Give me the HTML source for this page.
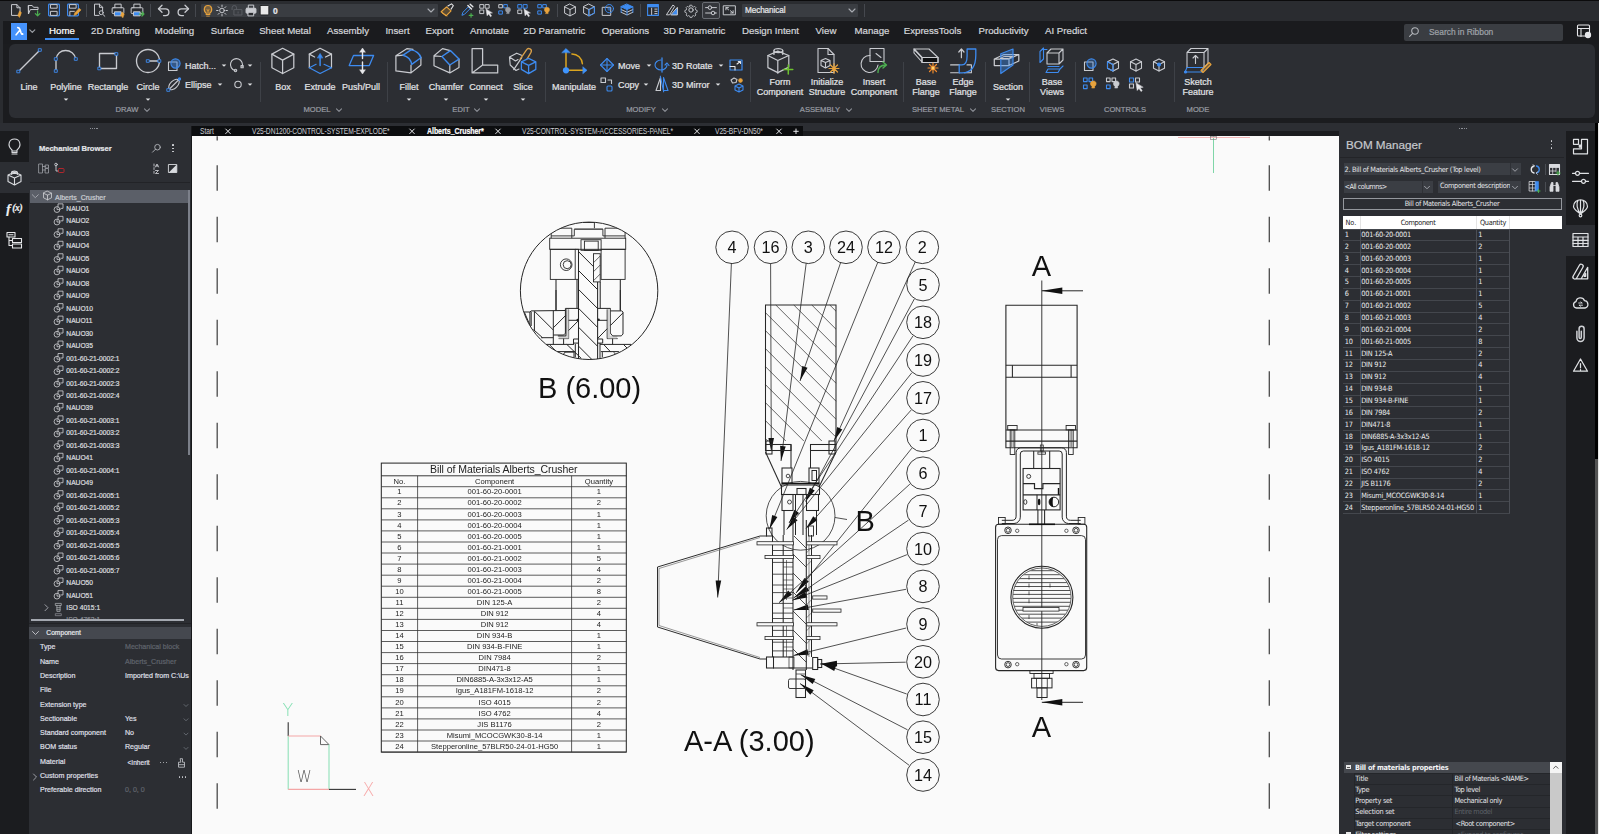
<!DOCTYPE html>
<html lang="en"><head><meta charset="utf-8"><title>Alberts_Crusher - Mechanical</title>
<style>
*{box-sizing:border-box;margin:0;padding:0}
html,body{width:1599px;height:834px;overflow:hidden;background:#1b1c1f}
body{position:relative;font-family:"Liberation Sans",sans-serif;color:#d6d8dc;-webkit-font-smoothing:antialiased}
div,span.t,svg.i{position:absolute}
span.t{white-space:nowrap;line-height:1;display:block;-webkit-text-stroke:.22px currentColor}
svg{display:block;overflow:visible}
svg.i{fill:none;stroke:#c9cbd0;stroke-width:1.1;stroke-linecap:round;stroke-linejoin:round}
.b{font-weight:bold}
</style></head><body>
<div style="left:0px;top:0px;width:1599px;height:20.5px;background:#2a2c30;border-top:1px solid #0b0b0c"></div>
<div style="left:201px;top:4px;width:237px;height:12.5px;background:#3a3d42;border-radius:1px"></div>
<span class="t b" style="top:10.5px;font-size:8.5px;color:#e6e7ea;left:273px;transform:translateY(-50%);">0</span>
<div style="left:742px;top:4px;width:116px;height:12.5px;background:#3a3d42;border-radius:1px"></div>
<span class="t" style="top:10.5px;font-size:8.2px;color:#e6e7ea;left:745px;transform:translateY(-50%);letter-spacing:-0.1px;">Mechanical</span>
<div style="left:702px;top:2px;width:18px;height:16.5px;border:1px solid #6a6d73;border-radius:2px;background:#34363b"></div>
<div style="left:86px;top:4px;width:1px;height:13px;background:#45484e"></div>
<div style="left:150px;top:4px;width:1px;height:13px;background:#45484e"></div>
<div style="left:195px;top:4px;width:1px;height:13px;background:#45484e"></div>
<div style="left:557px;top:4px;width:1px;height:13px;background:#45484e"></div>
<div style="left:640px;top:4px;width:1px;height:13px;background:#45484e"></div>
<div style="left:864px;top:4px;width:1px;height:13px;background:#45484e"></div>
<div style="left:0px;top:20.5px;width:1599px;height:23.5px;background:#1a1b1e"></div>
<div style="left:10.9px;top:23.2px;width:16.1px;height:16.8px;background:#4592fb"></div>
<span class="t" style="top:31.3px;font-size:9.7px;color:#ffffff;left:62.0px;transform:translate(-50%,-50%);">Home</span>
<span class="t" style="top:31.3px;font-size:9.7px;color:#d3d5d9;left:115.5px;transform:translate(-50%,-50%);">2D Drafting</span>
<span class="t" style="top:31.3px;font-size:9.7px;color:#d3d5d9;left:174.5px;transform:translate(-50%,-50%);">Modeling</span>
<span class="t" style="top:31.3px;font-size:9.7px;color:#d3d5d9;left:227.5px;transform:translate(-50%,-50%);">Surface</span>
<span class="t" style="top:31.3px;font-size:9.7px;color:#d3d5d9;left:285.0px;transform:translate(-50%,-50%);">Sheet Metal</span>
<span class="t" style="top:31.3px;font-size:9.7px;color:#d3d5d9;left:348.0px;transform:translate(-50%,-50%);">Assembly</span>
<span class="t" style="top:31.3px;font-size:9.7px;color:#d3d5d9;left:397.5px;transform:translate(-50%,-50%);">Insert</span>
<span class="t" style="top:31.3px;font-size:9.7px;color:#d3d5d9;left:439.5px;transform:translate(-50%,-50%);">Export</span>
<span class="t" style="top:31.3px;font-size:9.7px;color:#d3d5d9;left:489.5px;transform:translate(-50%,-50%);">Annotate</span>
<span class="t" style="top:31.3px;font-size:9.7px;color:#d3d5d9;left:554.5px;transform:translate(-50%,-50%);">2D Parametric</span>
<span class="t" style="top:31.3px;font-size:9.7px;color:#d3d5d9;left:625.5px;transform:translate(-50%,-50%);">Operations</span>
<span class="t" style="top:31.3px;font-size:9.7px;color:#d3d5d9;left:694.5px;transform:translate(-50%,-50%);">3D Parametric</span>
<span class="t" style="top:31.3px;font-size:9.7px;color:#d3d5d9;left:770.5px;transform:translate(-50%,-50%);">Design Intent</span>
<span class="t" style="top:31.3px;font-size:9.7px;color:#d3d5d9;left:826.0px;transform:translate(-50%,-50%);">View</span>
<span class="t" style="top:31.3px;font-size:9.7px;color:#d3d5d9;left:872.0px;transform:translate(-50%,-50%);">Manage</span>
<span class="t" style="top:31.3px;font-size:9.7px;color:#d3d5d9;left:932.5px;transform:translate(-50%,-50%);">ExpressTools</span>
<span class="t" style="top:31.3px;font-size:9.7px;color:#d3d5d9;left:1003.5px;transform:translate(-50%,-50%);">Productivity</span>
<span class="t" style="top:31.3px;font-size:9.7px;color:#d3d5d9;left:1066.0px;transform:translate(-50%,-50%);">AI Predict</span>
<div style="left:45px;top:38.3px;width:33.5px;height:2px;background:#3d8bf0"></div>
<div style="left:1403.5px;top:24px;width:159px;height:16.5px;background:#3a3d42;border-radius:2px"></div>
<span class="t" style="top:32.3px;font-size:8.4px;color:#9fa2a8;left:1429px;transform:translateY(-50%);">Search in Ribbon</span>
<div style="left:9px;top:44px;width:1585.5px;height:74.3px;background:#2c2e33;border-radius:6px"></div>
<div style="left:260px;top:61.5px;width:1px;height:40.5px;background:#3e4147"></div>
<div style="left:387px;top:61.5px;width:1px;height:40.5px;background:#3e4147"></div>
<div style="left:545.2px;top:61.5px;width:1px;height:40.5px;background:#3e4147"></div>
<div style="left:750px;top:61.5px;width:1px;height:40.5px;background:#3e4147"></div>
<div style="left:903.4px;top:61.5px;width:1px;height:40.5px;background:#3e4147"></div>
<div style="left:985.4px;top:61.5px;width:1px;height:40.5px;background:#3e4147"></div>
<div style="left:1029.2px;top:61.5px;width:1px;height:40.5px;background:#3e4147"></div>
<div style="left:1074.8px;top:61.5px;width:1px;height:40.5px;background:#3e4147"></div>
<div style="left:1174.4px;top:61.5px;width:1px;height:40.5px;background:#3e4147"></div>
<span class="t" style="top:87.3px;font-size:9px;color:#e1e3e6;left:29px;transform:translate(-50%,-50%);">Line</span>
<span class="t" style="top:87.3px;font-size:9px;color:#e1e3e6;left:66px;transform:translate(-50%,-50%);">Polyline</span>
<span class="t" style="top:87.3px;font-size:9px;color:#e1e3e6;left:108px;transform:translate(-50%,-50%);">Rectangle</span>
<span class="t" style="top:87.3px;font-size:9px;color:#e1e3e6;left:148px;transform:translate(-50%,-50%);">Circle</span>
<span class="t" style="top:87.3px;font-size:9px;color:#e1e3e6;left:283px;transform:translate(-50%,-50%);">Box</span>
<span class="t" style="top:87.3px;font-size:9px;color:#e1e3e6;left:320px;transform:translate(-50%,-50%);">Extrude</span>
<span class="t" style="top:87.3px;font-size:9px;color:#e1e3e6;left:361px;transform:translate(-50%,-50%);">Push/Pull</span>
<span class="t" style="top:87.3px;font-size:9px;color:#e1e3e6;left:409px;transform:translate(-50%,-50%);">Fillet</span>
<span class="t" style="top:87.3px;font-size:9px;color:#e1e3e6;left:446px;transform:translate(-50%,-50%);">Chamfer</span>
<span class="t" style="top:87.3px;font-size:9px;color:#e1e3e6;left:486px;transform:translate(-50%,-50%);">Connect</span>
<span class="t" style="top:87.3px;font-size:9px;color:#e1e3e6;left:523px;transform:translate(-50%,-50%);">Slice</span>
<span class="t" style="top:87.3px;font-size:9px;color:#e1e3e6;left:574px;transform:translate(-50%,-50%);">Manipulate</span>
<span class="t" style="top:87.3px;font-size:9px;color:#e1e3e6;left:1008px;transform:translate(-50%,-50%);">Section</span>
<span class="t" style="top:82.1px;font-size:9px;color:#e1e3e6;left:780px;transform:translate(-50%,-50%);">Form</span>
<span class="t" style="top:91.6px;font-size:9px;color:#e1e3e6;left:780px;transform:translate(-50%,-50%);">Component</span>
<span class="t" style="top:82.1px;font-size:9px;color:#e1e3e6;left:827px;transform:translate(-50%,-50%);">Initialize</span>
<span class="t" style="top:91.6px;font-size:9px;color:#e1e3e6;left:827px;transform:translate(-50%,-50%);">Structure</span>
<span class="t" style="top:82.1px;font-size:9px;color:#e1e3e6;left:874px;transform:translate(-50%,-50%);">Insert</span>
<span class="t" style="top:91.6px;font-size:9px;color:#e1e3e6;left:874px;transform:translate(-50%,-50%);">Component</span>
<span class="t" style="top:82.1px;font-size:9px;color:#e1e3e6;left:926px;transform:translate(-50%,-50%);">Base</span>
<span class="t" style="top:91.6px;font-size:9px;color:#e1e3e6;left:926px;transform:translate(-50%,-50%);">Flange</span>
<span class="t" style="top:82.1px;font-size:9px;color:#e1e3e6;left:963px;transform:translate(-50%,-50%);">Edge</span>
<span class="t" style="top:91.6px;font-size:9px;color:#e1e3e6;left:963px;transform:translate(-50%,-50%);">Flange</span>
<span class="t" style="top:82.1px;font-size:9px;color:#e1e3e6;left:1052px;transform:translate(-50%,-50%);">Base</span>
<span class="t" style="top:91.6px;font-size:9px;color:#e1e3e6;left:1052px;transform:translate(-50%,-50%);">Views</span>
<span class="t" style="top:82.1px;font-size:9px;color:#e1e3e6;left:1198px;transform:translate(-50%,-50%);">Sketch</span>
<span class="t" style="top:91.6px;font-size:9px;color:#e1e3e6;left:1198px;transform:translate(-50%,-50%);">Feature</span>
<span class="t" style="top:110.4px;font-size:7.6px;color:#989ba2;left:127px;transform:translate(-50%,-50%);letter-spacing:0px;">DRAW</span>
<span class="t" style="top:110.4px;font-size:7.6px;color:#989ba2;left:317px;transform:translate(-50%,-50%);letter-spacing:0px;">MODEL</span>
<span class="t" style="top:110.4px;font-size:7.6px;color:#989ba2;left:461px;transform:translate(-50%,-50%);letter-spacing:0px;">EDIT</span>
<span class="t" style="top:110.4px;font-size:7.6px;color:#989ba2;left:641px;transform:translate(-50%,-50%);letter-spacing:0px;">MODIFY</span>
<span class="t" style="top:110.4px;font-size:7.6px;color:#989ba2;left:820px;transform:translate(-50%,-50%);letter-spacing:0px;">ASSEMBLY</span>
<span class="t" style="top:110.4px;font-size:7.6px;color:#989ba2;left:938px;transform:translate(-50%,-50%);letter-spacing:0px;">SHEET METAL</span>
<span class="t" style="top:110.4px;font-size:7.6px;color:#989ba2;left:1008px;transform:translate(-50%,-50%);letter-spacing:0px;">SECTION</span>
<span class="t" style="top:110.4px;font-size:7.6px;color:#989ba2;left:1052px;transform:translate(-50%,-50%);letter-spacing:0px;">VIEWS</span>
<span class="t" style="top:110.4px;font-size:7.6px;color:#989ba2;left:1125px;transform:translate(-50%,-50%);letter-spacing:0px;">CONTROLS</span>
<span class="t" style="top:110.4px;font-size:7.6px;color:#989ba2;left:1198px;transform:translate(-50%,-50%);letter-spacing:0px;">MODE</span>
<span class="t" style="top:65.5px;font-size:9px;color:#e1e3e6;left:185px;transform:translateY(-50%);">Hatch...</span>
<span class="t" style="top:84.5px;font-size:9px;color:#e1e3e6;left:185px;transform:translateY(-50%);">Ellipse</span>
<span class="t" style="top:65.5px;font-size:9px;color:#e1e3e6;left:618px;transform:translateY(-50%);">Move</span>
<span class="t" style="top:84.5px;font-size:9px;color:#e1e3e6;left:618px;transform:translateY(-50%);">Copy</span>
<span class="t" style="top:65.5px;font-size:9px;color:#e1e3e6;left:672px;transform:translateY(-50%);">3D Rotate</span>
<span class="t" style="top:84.5px;font-size:9px;color:#e1e3e6;left:672px;transform:translateY(-50%);">3D Mirror</span>
<div style="left:0px;top:123.3px;width:1599px;height:8px;background:#2c2e33"></div>
<div style="left:0px;top:20px;width:3.4px;height:103.3px;background:#2a2c30"></div>
<div style="left:0px;top:131px;width:29px;height:703px;background:#1b1c1f"></div>
<div style="left:0px;top:162px;width:29px;height:30.5px;background:#2c2e33"></div>
<div style="left:29px;top:131px;width:162.5px;height:703px;background:#2c2e33"></div>
<div style="left:190.5px;top:126px;width:1.5px;height:708px;background:#17181a"></div>
<div style="left:89.5px;top:128px;width:1.3px;height:1.3px;background:#8d9097"></div>
<div style="left:91.8px;top:128px;width:1.3px;height:1.3px;background:#8d9097"></div>
<div style="left:94.1px;top:128px;width:1.3px;height:1.3px;background:#8d9097"></div>
<div style="left:96.4px;top:128px;width:1.3px;height:1.3px;background:#8d9097"></div>
<span class="t b" style="top:148.5px;font-size:7.6px;color:#e3e5e8;left:39px;transform:translateY(-50%);letter-spacing:-0.05px;">Mechanical Browser</span>
<div style="left:30px;top:181.5px;width:160px;height:1.2px;background:#222327"></div>
<div style="left:30px;top:190px;width:157.5px;height:12.8px;background:#5b5f68"></div>
<div style="left:187.5px;top:190px;width:2.6px;height:265px;background:#7c808a"></div>
<span class="t" style="top:196.5px;font-size:7px;color:#c9ccd1;left:55px;transform:translateY(-50%);">Alberts_Crusher</span>
<span class="t" style="top:208.97px;font-size:6.7px;color:#d9dbdf;left:66.3px;transform:translateY(-50%);">NAUO1</span>
<span class="t" style="top:221.44px;font-size:6.7px;color:#d9dbdf;left:66.3px;transform:translateY(-50%);">NAUO2</span>
<span class="t" style="top:233.91px;font-size:6.7px;color:#d9dbdf;left:66.3px;transform:translateY(-50%);">NAUO3</span>
<span class="t" style="top:246.38px;font-size:6.7px;color:#d9dbdf;left:66.3px;transform:translateY(-50%);">NAUO4</span>
<span class="t" style="top:258.85px;font-size:6.7px;color:#d9dbdf;left:66.3px;transform:translateY(-50%);">NAUO5</span>
<span class="t" style="top:271.32px;font-size:6.7px;color:#d9dbdf;left:66.3px;transform:translateY(-50%);">NAUO6</span>
<span class="t" style="top:283.79px;font-size:6.7px;color:#d9dbdf;left:66.3px;transform:translateY(-50%);">NAUO8</span>
<span class="t" style="top:296.26px;font-size:6.7px;color:#d9dbdf;left:66.3px;transform:translateY(-50%);">NAUO9</span>
<span class="t" style="top:308.73px;font-size:6.7px;color:#d9dbdf;left:66.3px;transform:translateY(-50%);">NAUO10</span>
<span class="t" style="top:321.2px;font-size:6.7px;color:#d9dbdf;left:66.3px;transform:translateY(-50%);">NAUO11</span>
<span class="t" style="top:333.67px;font-size:6.7px;color:#d9dbdf;left:66.3px;transform:translateY(-50%);">NAUO30</span>
<span class="t" style="top:346.14000000000004px;font-size:6.7px;color:#d9dbdf;left:66.3px;transform:translateY(-50%);">NAUO35</span>
<span class="t" style="top:358.61px;font-size:6.7px;color:#d9dbdf;left:66.3px;transform:translateY(-50%);">001-60-21-0002:1</span>
<span class="t" style="top:371.08px;font-size:6.7px;color:#d9dbdf;left:66.3px;transform:translateY(-50%);">001-60-21-0002:2</span>
<span class="t" style="top:383.55px;font-size:6.7px;color:#d9dbdf;left:66.3px;transform:translateY(-50%);">001-60-21-0002:3</span>
<span class="t" style="top:396.02000000000004px;font-size:6.7px;color:#d9dbdf;left:66.3px;transform:translateY(-50%);">001-60-21-0002:4</span>
<span class="t" style="top:408.49px;font-size:6.7px;color:#d9dbdf;left:66.3px;transform:translateY(-50%);">NAUO39</span>
<span class="t" style="top:420.96px;font-size:6.7px;color:#d9dbdf;left:66.3px;transform:translateY(-50%);">001-60-21-0003:1</span>
<span class="t" style="top:433.43px;font-size:6.7px;color:#d9dbdf;left:66.3px;transform:translateY(-50%);">001-60-21-0003:2</span>
<span class="t" style="top:445.90000000000003px;font-size:6.7px;color:#d9dbdf;left:66.3px;transform:translateY(-50%);">001-60-21-0003:3</span>
<span class="t" style="top:458.37px;font-size:6.7px;color:#d9dbdf;left:66.3px;transform:translateY(-50%);">NAUO41</span>
<span class="t" style="top:470.84000000000003px;font-size:6.7px;color:#d9dbdf;left:66.3px;transform:translateY(-50%);">001-60-21-0004:1</span>
<span class="t" style="top:483.31px;font-size:6.7px;color:#d9dbdf;left:66.3px;transform:translateY(-50%);">NAUO49</span>
<span class="t" style="top:495.78000000000003px;font-size:6.7px;color:#d9dbdf;left:66.3px;transform:translateY(-50%);">001-60-21-0005:1</span>
<span class="t" style="top:508.25px;font-size:6.7px;color:#d9dbdf;left:66.3px;transform:translateY(-50%);">001-60-21-0005:2</span>
<span class="t" style="top:520.72px;font-size:6.7px;color:#d9dbdf;left:66.3px;transform:translateY(-50%);">001-60-21-0005:3</span>
<span class="t" style="top:533.1899999999999px;font-size:6.7px;color:#d9dbdf;left:66.3px;transform:translateY(-50%);">001-60-21-0005:4</span>
<span class="t" style="top:545.66px;font-size:6.7px;color:#d9dbdf;left:66.3px;transform:translateY(-50%);">001-60-21-0005:5</span>
<span class="t" style="top:558.1299999999999px;font-size:6.7px;color:#d9dbdf;left:66.3px;transform:translateY(-50%);">001-60-21-0005:6</span>
<span class="t" style="top:570.5999999999999px;font-size:6.7px;color:#d9dbdf;left:66.3px;transform:translateY(-50%);">001-60-21-0005:7</span>
<span class="t" style="top:583.0699999999999px;font-size:6.7px;color:#d9dbdf;left:66.3px;transform:translateY(-50%);">NAUO50</span>
<span class="t" style="top:595.54px;font-size:6.7px;color:#d9dbdf;left:66.3px;transform:translateY(-50%);">NAUO51</span>
<span class="t" style="top:608.01px;font-size:6.7px;color:#d9dbdf;left:66.3px;transform:translateY(-50%);">ISO 4015:1</span>
<div style="left:30px;top:613px;width:157px;height:6.5px;overflow:hidden"><span class="t" style="top:6.8px;font-size:6.7px;color:#8f9299;left:36.3px;transform:translateY(-50%);">ISO 4762:1</span></div>
<div style="left:30.5px;top:619.3px;width:153.5px;height:2px;background:#a4a8b0"></div>
<div style="left:29px;top:622.5px;width:161.5px;height:1.3px;background:#222327"></div>
<div style="left:29px;top:626.5px;width:161.5px;height:12.8px;background:#45484f"></div>
<span class="t" style="top:633px;font-size:6.7px;color:#e3e5e8;left:46.3px;transform:translateY(-50%);">Component</span>
<span class="t" style="top:648.3px;font-size:7.1px;color:#dcdee2;left:40px;transform:translateY(-50%);">Type</span>
<span class="t" style="top:648.3px;font-size:7.1px;color:#5f636b;left:125px;transform:translateY(-50%);">Mechanical block</span>
<span class="t" style="top:662.5999999999999px;font-size:7.1px;color:#dcdee2;left:40px;transform:translateY(-50%);">Name</span>
<span class="t" style="top:662.5999999999999px;font-size:7.1px;color:#5f636b;left:125px;transform:translateY(-50%);">Alberts_Crusher</span>
<span class="t" style="top:676.9px;font-size:7.1px;color:#dcdee2;left:40px;transform:translateY(-50%);">Description</span>
<span class="t" style="top:676.9px;font-size:7.1px;color:#dcdee2;left:125px;transform:translateY(-50%);">Imported from C:\Us</span>
<span class="t" style="top:691.1999999999999px;font-size:7.1px;color:#dcdee2;left:40px;transform:translateY(-50%);">File</span>
<span class="t" style="top:705.5px;font-size:7.1px;color:#dcdee2;left:40px;transform:translateY(-50%);">Extension type</span>
<span class="t" style="top:719.8px;font-size:7.1px;color:#dcdee2;left:40px;transform:translateY(-50%);">Sectionable</span>
<span class="t" style="top:719.8px;font-size:7.1px;color:#dcdee2;left:125px;transform:translateY(-50%);">Yes</span>
<span class="t" style="top:734.0999999999999px;font-size:7.1px;color:#dcdee2;left:40px;transform:translateY(-50%);">Standard component</span>
<span class="t" style="top:734.0999999999999px;font-size:7.1px;color:#dcdee2;left:125px;transform:translateY(-50%);">No</span>
<span class="t" style="top:748.4px;font-size:7.1px;color:#dcdee2;left:40px;transform:translateY(-50%);">BOM status</span>
<span class="t" style="top:748.4px;font-size:7.1px;color:#dcdee2;left:125px;transform:translateY(-50%);">Regular</span>
<span class="t" style="top:762.6999999999999px;font-size:7.1px;color:#dcdee2;left:40px;transform:translateY(-50%);">Material</span>
<span class="t" style="top:777.0px;font-size:7.1px;color:#dcdee2;left:40px;transform:translateY(-50%);">Custom properties</span>
<span class="t" style="top:791.3px;font-size:7.1px;color:#dcdee2;left:40px;transform:translateY(-50%);">Preferable direction</span>
<span class="t" style="top:791.3px;font-size:7.1px;color:#5f636b;left:125px;transform:translateY(-50%);">0, 0, 0</span>
<span class="t" style="top:762.6999999999999px;font-size:6.6px;color:#dcdee2;left:127.5px;transform:translateY(-50%);">&lt;Inherit</span>
<div style="left:160px;top:762.0999999999999px;width:1.4px;height:1.4px;background:#c9cbd0;border-radius:50%"></div>
<div style="left:163px;top:762.0999999999999px;width:1.4px;height:1.4px;background:#c9cbd0;border-radius:50%"></div>
<div style="left:166px;top:762.0999999999999px;width:1.4px;height:1.4px;background:#c9cbd0;border-radius:50%"></div>
<div style="left:178.5px;top:776.4px;width:1.4px;height:1.4px;background:#c9cbd0;border-radius:50%"></div>
<div style="left:181.5px;top:776.4px;width:1.4px;height:1.4px;background:#c9cbd0;border-radius:50%"></div>
<div style="left:184.5px;top:776.4px;width:1.4px;height:1.4px;background:#c9cbd0;border-radius:50%"></div>
<div style="left:172.3px;top:144.39px;width:1.7px;height:1.7px;background:#d9dbdf;border-radius:50%"></div>
<div style="left:172.3px;top:147.6px;width:1.7px;height:1.7px;background:#d9dbdf;border-radius:50%"></div>
<div style="left:172.3px;top:150.81px;width:1.7px;height:1.7px;background:#d9dbdf;border-radius:50%"></div>
<span class="t b" style="top:208px;font-size:13px;color:#f2f3f5;left:6.3px;transform:translateY(-50%);font-family:'Liberation Serif',serif;font-style:italic;">f</span>
<span class="t b" style="top:208.8px;font-size:9.5px;color:#f2f3f5;left:12.3px;transform:translateY(-50%);letter-spacing:-0.4px;font-family:'Liberation Serif',serif;font-style:italic;">(x)</span>
<div style="left:192.3px;top:126.2px;width:611px;height:10.1px;background:#0c0d0f"></div>
<span class="t" style="left:200px;top:131px;font-size:9.4px;color:#c9cbd0;-webkit-text-stroke:0;transform:translateY(-50%) scaleX(0.715);transform-origin:0 50%;letter-spacing:-.1px">Start</span>
<span class="t" style="left:252px;top:131px;font-size:9.4px;color:#c9cbd0;-webkit-text-stroke:0;transform:translateY(-50%) scaleX(0.715);transform-origin:0 50%;letter-spacing:-.1px">V25-DN1200-CONTROL-SYSTEM-EXPLODE*</span>
<span class="t b" style="left:427px;top:131px;font-size:9.4px;color:#ffffff;transform:translateY(-50%) scaleX(0.75);transform-origin:0 50%;letter-spacing:-.1px">Alberts_Crusher*</span>
<span class="t" style="left:522px;top:131px;font-size:9.4px;color:#c9cbd0;-webkit-text-stroke:0;transform:translateY(-50%) scaleX(0.715);transform-origin:0 50%;letter-spacing:-.1px">V25-CONTROL-SYSTEM-ACCESSORIES-PANEL*</span>
<span class="t" style="left:715px;top:131px;font-size:9.4px;color:#c9cbd0;-webkit-text-stroke:0;transform:translateY(-50%) scaleX(0.715);transform-origin:0 50%;letter-spacing:-.1px">V25-BFV-DN50*</span>
<div style="left:1338.5px;top:131px;width:227px;height:703px;background:#2c2e33"></div>
<div style="left:1565.5px;top:131px;width:29.5px;height:703px;background:#1b1c1f"></div>
<div style="left:1565.5px;top:225px;width:29.5px;height:31px;background:#2c2e33"></div>
<div style="left:1595px;top:123.3px;width:2.7px;height:335.4px;background:#010101"></div>
<div style="left:1595px;top:458.7px;width:2.7px;height:376px;background:#545454"></div>
<div style="left:1597.7px;top:122.8px;width:1.3px;height:712px;background:#e9e9e9"></div>
<div style="left:1459.0px;top:128px;width:1.3px;height:1.3px;background:#8d9097"></div>
<div style="left:1461.3px;top:128px;width:1.3px;height:1.3px;background:#8d9097"></div>
<div style="left:1463.6px;top:128px;width:1.3px;height:1.3px;background:#8d9097"></div>
<div style="left:1465.9px;top:128px;width:1.3px;height:1.3px;background:#8d9097"></div>
<span class="t" style="top:144.5px;font-size:11.7px;color:#c6c8cc;left:1346px;transform:translateY(-50%);">BOM Manager</span>
<div style="left:1550.8px;top:140.29999999999998px;width:1.7px;height:1.7px;background:#d9dbdf;border-radius:50%"></div>
<div style="left:1550.8px;top:143.6px;width:1.7px;height:1.7px;background:#d9dbdf;border-radius:50%"></div>
<div style="left:1550.8px;top:146.9px;width:1.7px;height:1.7px;background:#d9dbdf;border-radius:50%"></div>
<div style="left:1340px;top:156.8px;width:224px;height:1.2px;background:#232428"></div>
<div style="left:1343.6px;top:163px;width:177.5px;height:12.3px;background:#3b3e44"></div>
<div style="left:1343.6px;top:180.5px;width:89.5px;height:12.3px;background:#3b3e44"></div>
<div style="left:1438px;top:180.5px;width:83px;height:12.3px;background:#3b3e44"></div>
<div style="left:1509.5px;top:163px;width:1px;height:12.3px;background:#2f3136"></div>
<div style="left:1421.5px;top:180.5px;width:1px;height:12.3px;background:#2f3136"></div>
<span class="t" style="top:169.5px;font-size:7.3px;color:#e6e7ea;left:1344.5px;transform:translateY(-50%);letter-spacing:-0.27px;font-family:'DejaVu Sans Condensed','DejaVu Sans','Liberation Sans',sans-serif;-webkit-text-stroke:0;">2. Bill of Materials Alberts_Crusher (Top level)</span>
<span class="t" style="top:187px;font-size:7.3px;color:#e6e7ea;left:1344.5px;transform:translateY(-50%);letter-spacing:-0.5px;font-family:'DejaVu Sans Condensed','DejaVu Sans','Liberation Sans',sans-serif;-webkit-text-stroke:0;">&lt;All columns&gt;</span>
<div style="left:1438.5px;top:181px;width:71px;height:11.3px;overflow:hidden"><span class="t" style="top:5.2px;font-size:7.3px;color:#e6e7ea;left:1.5px;transform:translateY(-50%);letter-spacing:-0.3px;font-family:'DejaVu Sans Condensed','DejaVu Sans','Liberation Sans',sans-serif;-webkit-text-stroke:0;">Component description</span></div>
<div style="left:1544.5px;top:164px;width:1px;height:10.5px;background:#4a4d53"></div>
<div style="left:1544.5px;top:181.5px;width:1px;height:10.5px;background:#4a4d53"></div>
<div style="left:1343.3px;top:197.5px;width:219px;height:12.6px;border:1.5px solid #94979d;background:#2c2e33"></div>
<span class="t" style="top:204px;font-size:7.3px;color:#e6e7ea;left:1452px;transform:translate(-50%,-50%);letter-spacing:-0.31px;font-family:'DejaVu Sans Condensed','DejaVu Sans','Liberation Sans',sans-serif;-webkit-text-stroke:0;">Bill of Materials Alberts_Crusher</span>
<div style="left:1343.3px;top:216px;width:219px;height:12.8px;background:#ffffff"></div>
<div style="left:1359.8px;top:216px;width:1px;height:12.8px;background:#e4e4e4"></div>
<div style="left:1476px;top:216px;width:1px;height:12.8px;background:#e4e4e4"></div>
<div style="left:1509.3px;top:216px;width:1px;height:12.8px;background:#e4e4e4"></div>
<span class="t" style="top:222.5px;font-size:7.3px;color:#222;left:1345.5px;transform:translateY(-50%);letter-spacing:-0.05px;font-family:'DejaVu Sans Condensed','DejaVu Sans','Liberation Sans',sans-serif;-webkit-text-stroke:0;">No.</span>
<span class="t" style="top:222.5px;font-size:7.3px;color:#222;left:1418px;transform:translate(-50%,-50%);letter-spacing:-0.38px;font-family:'DejaVu Sans Condensed','DejaVu Sans','Liberation Sans',sans-serif;-webkit-text-stroke:0;">Component</span>
<span class="t" style="top:222.5px;font-size:7.3px;color:#222;left:1493px;transform:translate(-50%,-50%);letter-spacing:-0.27px;font-family:'DejaVu Sans Condensed','DejaVu Sans','Liberation Sans',sans-serif;-webkit-text-stroke:0;">Quantity</span>
<div style="left:1343.3px;top:228.5px;width:166.5px;height:0.9px;background:#44474d"></div>
<div style="left:1343.3px;top:240.36px;width:166.5px;height:0.9px;background:#44474d"></div>
<div style="left:1343.3px;top:252.22px;width:166.5px;height:0.9px;background:#44474d"></div>
<div style="left:1343.3px;top:264.08px;width:166.5px;height:0.9px;background:#44474d"></div>
<div style="left:1343.3px;top:275.94px;width:166.5px;height:0.9px;background:#44474d"></div>
<div style="left:1343.3px;top:287.8px;width:166.5px;height:0.9px;background:#44474d"></div>
<div style="left:1343.3px;top:299.66px;width:166.5px;height:0.9px;background:#44474d"></div>
<div style="left:1343.3px;top:311.52px;width:166.5px;height:0.9px;background:#44474d"></div>
<div style="left:1343.3px;top:323.38px;width:166.5px;height:0.9px;background:#44474d"></div>
<div style="left:1343.3px;top:335.24px;width:166.5px;height:0.9px;background:#44474d"></div>
<div style="left:1343.3px;top:347.09999999999997px;width:166.5px;height:0.9px;background:#44474d"></div>
<div style="left:1343.3px;top:358.96px;width:166.5px;height:0.9px;background:#44474d"></div>
<div style="left:1343.3px;top:370.82px;width:166.5px;height:0.9px;background:#44474d"></div>
<div style="left:1343.3px;top:382.68px;width:166.5px;height:0.9px;background:#44474d"></div>
<div style="left:1343.3px;top:394.54px;width:166.5px;height:0.9px;background:#44474d"></div>
<div style="left:1343.3px;top:406.4px;width:166.5px;height:0.9px;background:#44474d"></div>
<div style="left:1343.3px;top:418.26px;width:166.5px;height:0.9px;background:#44474d"></div>
<div style="left:1343.3px;top:430.12px;width:166.5px;height:0.9px;background:#44474d"></div>
<div style="left:1343.3px;top:441.97999999999996px;width:166.5px;height:0.9px;background:#44474d"></div>
<div style="left:1343.3px;top:453.84px;width:166.5px;height:0.9px;background:#44474d"></div>
<div style="left:1343.3px;top:465.7px;width:166.5px;height:0.9px;background:#44474d"></div>
<div style="left:1343.3px;top:477.56px;width:166.5px;height:0.9px;background:#44474d"></div>
<div style="left:1343.3px;top:489.41999999999996px;width:166.5px;height:0.9px;background:#44474d"></div>
<div style="left:1343.3px;top:501.28px;width:166.5px;height:0.9px;background:#44474d"></div>
<div style="left:1343.3px;top:513.1400000000001px;width:166.5px;height:0.9px;background:#44474d"></div>
<div style="left:1359.8px;top:228.8px;width:0.9px;height:284.64px;background:#4b4e55"></div>
<div style="left:1476px;top:228.8px;width:0.9px;height:284.64px;background:#4b4e55"></div>
<div style="left:1509.3px;top:228.8px;width:0.9px;height:284.64px;background:#4b4e55"></div>
<span class="t" style="top:234.93px;font-size:7.3px;color:#eceef0;left:1344.8px;transform:translateY(-50%);letter-spacing:-0.25px;font-family:'DejaVu Sans Condensed','DejaVu Sans','Liberation Sans',sans-serif;-webkit-text-stroke:0;">1</span>
<span class="t" style="top:234.93px;font-size:7.3px;color:#eceef0;left:1361.3px;transform:translateY(-50%);letter-spacing:-0.25px;font-family:'DejaVu Sans Condensed','DejaVu Sans','Liberation Sans',sans-serif;-webkit-text-stroke:0;">001-60-20-0001</span>
<span class="t" style="top:234.93px;font-size:7.3px;color:#eceef0;left:1478.2px;transform:translateY(-50%);font-family:'DejaVu Sans Condensed','DejaVu Sans','Liberation Sans',sans-serif;-webkit-text-stroke:0;">1</span>
<span class="t" style="top:246.79000000000002px;font-size:7.3px;color:#eceef0;left:1344.8px;transform:translateY(-50%);letter-spacing:-0.25px;font-family:'DejaVu Sans Condensed','DejaVu Sans','Liberation Sans',sans-serif;-webkit-text-stroke:0;">2</span>
<span class="t" style="top:246.79000000000002px;font-size:7.3px;color:#eceef0;left:1361.3px;transform:translateY(-50%);letter-spacing:-0.25px;font-family:'DejaVu Sans Condensed','DejaVu Sans','Liberation Sans',sans-serif;-webkit-text-stroke:0;">001-60-20-0002</span>
<span class="t" style="top:246.79000000000002px;font-size:7.3px;color:#eceef0;left:1478.2px;transform:translateY(-50%);font-family:'DejaVu Sans Condensed','DejaVu Sans','Liberation Sans',sans-serif;-webkit-text-stroke:0;">2</span>
<span class="t" style="top:258.65px;font-size:7.3px;color:#eceef0;left:1344.8px;transform:translateY(-50%);letter-spacing:-0.25px;font-family:'DejaVu Sans Condensed','DejaVu Sans','Liberation Sans',sans-serif;-webkit-text-stroke:0;">3</span>
<span class="t" style="top:258.65px;font-size:7.3px;color:#eceef0;left:1361.3px;transform:translateY(-50%);letter-spacing:-0.25px;font-family:'DejaVu Sans Condensed','DejaVu Sans','Liberation Sans',sans-serif;-webkit-text-stroke:0;">001-60-20-0003</span>
<span class="t" style="top:258.65px;font-size:7.3px;color:#eceef0;left:1478.2px;transform:translateY(-50%);font-family:'DejaVu Sans Condensed','DejaVu Sans','Liberation Sans',sans-serif;-webkit-text-stroke:0;">1</span>
<span class="t" style="top:270.51px;font-size:7.3px;color:#eceef0;left:1344.8px;transform:translateY(-50%);letter-spacing:-0.25px;font-family:'DejaVu Sans Condensed','DejaVu Sans','Liberation Sans',sans-serif;-webkit-text-stroke:0;">4</span>
<span class="t" style="top:270.51px;font-size:7.3px;color:#eceef0;left:1361.3px;transform:translateY(-50%);letter-spacing:-0.25px;font-family:'DejaVu Sans Condensed','DejaVu Sans','Liberation Sans',sans-serif;-webkit-text-stroke:0;">001-60-20-0004</span>
<span class="t" style="top:270.51px;font-size:7.3px;color:#eceef0;left:1478.2px;transform:translateY(-50%);font-family:'DejaVu Sans Condensed','DejaVu Sans','Liberation Sans',sans-serif;-webkit-text-stroke:0;">1</span>
<span class="t" style="top:282.37px;font-size:7.3px;color:#eceef0;left:1344.8px;transform:translateY(-50%);letter-spacing:-0.25px;font-family:'DejaVu Sans Condensed','DejaVu Sans','Liberation Sans',sans-serif;-webkit-text-stroke:0;">5</span>
<span class="t" style="top:282.37px;font-size:7.3px;color:#eceef0;left:1361.3px;transform:translateY(-50%);letter-spacing:-0.25px;font-family:'DejaVu Sans Condensed','DejaVu Sans','Liberation Sans',sans-serif;-webkit-text-stroke:0;">001-60-20-0005</span>
<span class="t" style="top:282.37px;font-size:7.3px;color:#eceef0;left:1478.2px;transform:translateY(-50%);font-family:'DejaVu Sans Condensed','DejaVu Sans','Liberation Sans',sans-serif;-webkit-text-stroke:0;">1</span>
<span class="t" style="top:294.23px;font-size:7.3px;color:#eceef0;left:1344.8px;transform:translateY(-50%);letter-spacing:-0.25px;font-family:'DejaVu Sans Condensed','DejaVu Sans','Liberation Sans',sans-serif;-webkit-text-stroke:0;">6</span>
<span class="t" style="top:294.23px;font-size:7.3px;color:#eceef0;left:1361.3px;transform:translateY(-50%);letter-spacing:-0.25px;font-family:'DejaVu Sans Condensed','DejaVu Sans','Liberation Sans',sans-serif;-webkit-text-stroke:0;">001-60-21-0001</span>
<span class="t" style="top:294.23px;font-size:7.3px;color:#eceef0;left:1478.2px;transform:translateY(-50%);font-family:'DejaVu Sans Condensed','DejaVu Sans','Liberation Sans',sans-serif;-webkit-text-stroke:0;">1</span>
<span class="t" style="top:306.09000000000003px;font-size:7.3px;color:#eceef0;left:1344.8px;transform:translateY(-50%);letter-spacing:-0.25px;font-family:'DejaVu Sans Condensed','DejaVu Sans','Liberation Sans',sans-serif;-webkit-text-stroke:0;">7</span>
<span class="t" style="top:306.09000000000003px;font-size:7.3px;color:#eceef0;left:1361.3px;transform:translateY(-50%);letter-spacing:-0.25px;font-family:'DejaVu Sans Condensed','DejaVu Sans','Liberation Sans',sans-serif;-webkit-text-stroke:0;">001-60-21-0002</span>
<span class="t" style="top:306.09000000000003px;font-size:7.3px;color:#eceef0;left:1478.2px;transform:translateY(-50%);font-family:'DejaVu Sans Condensed','DejaVu Sans','Liberation Sans',sans-serif;-webkit-text-stroke:0;">5</span>
<span class="t" style="top:317.95px;font-size:7.3px;color:#eceef0;left:1344.8px;transform:translateY(-50%);letter-spacing:-0.25px;font-family:'DejaVu Sans Condensed','DejaVu Sans','Liberation Sans',sans-serif;-webkit-text-stroke:0;">8</span>
<span class="t" style="top:317.95px;font-size:7.3px;color:#eceef0;left:1361.3px;transform:translateY(-50%);letter-spacing:-0.25px;font-family:'DejaVu Sans Condensed','DejaVu Sans','Liberation Sans',sans-serif;-webkit-text-stroke:0;">001-60-21-0003</span>
<span class="t" style="top:317.95px;font-size:7.3px;color:#eceef0;left:1478.2px;transform:translateY(-50%);font-family:'DejaVu Sans Condensed','DejaVu Sans','Liberation Sans',sans-serif;-webkit-text-stroke:0;">4</span>
<span class="t" style="top:329.81px;font-size:7.3px;color:#eceef0;left:1344.8px;transform:translateY(-50%);letter-spacing:-0.25px;font-family:'DejaVu Sans Condensed','DejaVu Sans','Liberation Sans',sans-serif;-webkit-text-stroke:0;">9</span>
<span class="t" style="top:329.81px;font-size:7.3px;color:#eceef0;left:1361.3px;transform:translateY(-50%);letter-spacing:-0.25px;font-family:'DejaVu Sans Condensed','DejaVu Sans','Liberation Sans',sans-serif;-webkit-text-stroke:0;">001-60-21-0004</span>
<span class="t" style="top:329.81px;font-size:7.3px;color:#eceef0;left:1478.2px;transform:translateY(-50%);font-family:'DejaVu Sans Condensed','DejaVu Sans','Liberation Sans',sans-serif;-webkit-text-stroke:0;">2</span>
<span class="t" style="top:341.67px;font-size:7.3px;color:#eceef0;left:1344.8px;transform:translateY(-50%);letter-spacing:-0.25px;font-family:'DejaVu Sans Condensed','DejaVu Sans','Liberation Sans',sans-serif;-webkit-text-stroke:0;">10</span>
<span class="t" style="top:341.67px;font-size:7.3px;color:#eceef0;left:1361.3px;transform:translateY(-50%);letter-spacing:-0.25px;font-family:'DejaVu Sans Condensed','DejaVu Sans','Liberation Sans',sans-serif;-webkit-text-stroke:0;">001-60-21-0005</span>
<span class="t" style="top:341.67px;font-size:7.3px;color:#eceef0;left:1478.2px;transform:translateY(-50%);font-family:'DejaVu Sans Condensed','DejaVu Sans','Liberation Sans',sans-serif;-webkit-text-stroke:0;">8</span>
<span class="t" style="top:353.53px;font-size:7.3px;color:#eceef0;left:1344.8px;transform:translateY(-50%);letter-spacing:-0.25px;font-family:'DejaVu Sans Condensed','DejaVu Sans','Liberation Sans',sans-serif;-webkit-text-stroke:0;">11</span>
<span class="t" style="top:353.53px;font-size:7.3px;color:#eceef0;left:1361.3px;transform:translateY(-50%);letter-spacing:-0.25px;font-family:'DejaVu Sans Condensed','DejaVu Sans','Liberation Sans',sans-serif;-webkit-text-stroke:0;">DIN 125-A</span>
<span class="t" style="top:353.53px;font-size:7.3px;color:#eceef0;left:1478.2px;transform:translateY(-50%);font-family:'DejaVu Sans Condensed','DejaVu Sans','Liberation Sans',sans-serif;-webkit-text-stroke:0;">2</span>
<span class="t" style="top:365.39px;font-size:7.3px;color:#eceef0;left:1344.8px;transform:translateY(-50%);letter-spacing:-0.25px;font-family:'DejaVu Sans Condensed','DejaVu Sans','Liberation Sans',sans-serif;-webkit-text-stroke:0;">12</span>
<span class="t" style="top:365.39px;font-size:7.3px;color:#eceef0;left:1361.3px;transform:translateY(-50%);letter-spacing:-0.25px;font-family:'DejaVu Sans Condensed','DejaVu Sans','Liberation Sans',sans-serif;-webkit-text-stroke:0;">DIN 912</span>
<span class="t" style="top:365.39px;font-size:7.3px;color:#eceef0;left:1478.2px;transform:translateY(-50%);font-family:'DejaVu Sans Condensed','DejaVu Sans','Liberation Sans',sans-serif;-webkit-text-stroke:0;">4</span>
<span class="t" style="top:377.25px;font-size:7.3px;color:#eceef0;left:1344.8px;transform:translateY(-50%);letter-spacing:-0.25px;font-family:'DejaVu Sans Condensed','DejaVu Sans','Liberation Sans',sans-serif;-webkit-text-stroke:0;">13</span>
<span class="t" style="top:377.25px;font-size:7.3px;color:#eceef0;left:1361.3px;transform:translateY(-50%);letter-spacing:-0.25px;font-family:'DejaVu Sans Condensed','DejaVu Sans','Liberation Sans',sans-serif;-webkit-text-stroke:0;">DIN 912</span>
<span class="t" style="top:377.25px;font-size:7.3px;color:#eceef0;left:1478.2px;transform:translateY(-50%);font-family:'DejaVu Sans Condensed','DejaVu Sans','Liberation Sans',sans-serif;-webkit-text-stroke:0;">4</span>
<span class="t" style="top:389.11px;font-size:7.3px;color:#eceef0;left:1344.8px;transform:translateY(-50%);letter-spacing:-0.25px;font-family:'DejaVu Sans Condensed','DejaVu Sans','Liberation Sans',sans-serif;-webkit-text-stroke:0;">14</span>
<span class="t" style="top:389.11px;font-size:7.3px;color:#eceef0;left:1361.3px;transform:translateY(-50%);letter-spacing:-0.25px;font-family:'DejaVu Sans Condensed','DejaVu Sans','Liberation Sans',sans-serif;-webkit-text-stroke:0;">DIN 934-B</span>
<span class="t" style="top:389.11px;font-size:7.3px;color:#eceef0;left:1478.2px;transform:translateY(-50%);font-family:'DejaVu Sans Condensed','DejaVu Sans','Liberation Sans',sans-serif;-webkit-text-stroke:0;">1</span>
<span class="t" style="top:400.97px;font-size:7.3px;color:#eceef0;left:1344.8px;transform:translateY(-50%);letter-spacing:-0.25px;font-family:'DejaVu Sans Condensed','DejaVu Sans','Liberation Sans',sans-serif;-webkit-text-stroke:0;">15</span>
<span class="t" style="top:400.97px;font-size:7.3px;color:#eceef0;left:1361.3px;transform:translateY(-50%);letter-spacing:-0.25px;font-family:'DejaVu Sans Condensed','DejaVu Sans','Liberation Sans',sans-serif;-webkit-text-stroke:0;">DIN 934-B-FINE</span>
<span class="t" style="top:400.97px;font-size:7.3px;color:#eceef0;left:1478.2px;transform:translateY(-50%);font-family:'DejaVu Sans Condensed','DejaVu Sans','Liberation Sans',sans-serif;-webkit-text-stroke:0;">1</span>
<span class="t" style="top:412.83px;font-size:7.3px;color:#eceef0;left:1344.8px;transform:translateY(-50%);letter-spacing:-0.25px;font-family:'DejaVu Sans Condensed','DejaVu Sans','Liberation Sans',sans-serif;-webkit-text-stroke:0;">16</span>
<span class="t" style="top:412.83px;font-size:7.3px;color:#eceef0;left:1361.3px;transform:translateY(-50%);letter-spacing:-0.25px;font-family:'DejaVu Sans Condensed','DejaVu Sans','Liberation Sans',sans-serif;-webkit-text-stroke:0;">DIN 7984</span>
<span class="t" style="top:412.83px;font-size:7.3px;color:#eceef0;left:1478.2px;transform:translateY(-50%);font-family:'DejaVu Sans Condensed','DejaVu Sans','Liberation Sans',sans-serif;-webkit-text-stroke:0;">2</span>
<span class="t" style="top:424.69px;font-size:7.3px;color:#eceef0;left:1344.8px;transform:translateY(-50%);letter-spacing:-0.25px;font-family:'DejaVu Sans Condensed','DejaVu Sans','Liberation Sans',sans-serif;-webkit-text-stroke:0;">17</span>
<span class="t" style="top:424.69px;font-size:7.3px;color:#eceef0;left:1361.3px;transform:translateY(-50%);letter-spacing:-0.25px;font-family:'DejaVu Sans Condensed','DejaVu Sans','Liberation Sans',sans-serif;-webkit-text-stroke:0;">DIN471-8</span>
<span class="t" style="top:424.69px;font-size:7.3px;color:#eceef0;left:1478.2px;transform:translateY(-50%);font-family:'DejaVu Sans Condensed','DejaVu Sans','Liberation Sans',sans-serif;-webkit-text-stroke:0;">1</span>
<span class="t" style="top:436.55px;font-size:7.3px;color:#eceef0;left:1344.8px;transform:translateY(-50%);letter-spacing:-0.25px;font-family:'DejaVu Sans Condensed','DejaVu Sans','Liberation Sans',sans-serif;-webkit-text-stroke:0;">18</span>
<span class="t" style="top:436.55px;font-size:7.3px;color:#eceef0;left:1361.3px;transform:translateY(-50%);letter-spacing:-0.25px;font-family:'DejaVu Sans Condensed','DejaVu Sans','Liberation Sans',sans-serif;-webkit-text-stroke:0;">DIN6885-A-3x3x12-A5</span>
<span class="t" style="top:436.55px;font-size:7.3px;color:#eceef0;left:1478.2px;transform:translateY(-50%);font-family:'DejaVu Sans Condensed','DejaVu Sans','Liberation Sans',sans-serif;-webkit-text-stroke:0;">1</span>
<span class="t" style="top:448.40999999999997px;font-size:7.3px;color:#eceef0;left:1344.8px;transform:translateY(-50%);letter-spacing:-0.25px;font-family:'DejaVu Sans Condensed','DejaVu Sans','Liberation Sans',sans-serif;-webkit-text-stroke:0;">19</span>
<span class="t" style="top:448.40999999999997px;font-size:7.3px;color:#eceef0;left:1361.3px;transform:translateY(-50%);letter-spacing:-0.25px;font-family:'DejaVu Sans Condensed','DejaVu Sans','Liberation Sans',sans-serif;-webkit-text-stroke:0;">Igus_A181FM-1618-12</span>
<span class="t" style="top:448.40999999999997px;font-size:7.3px;color:#eceef0;left:1478.2px;transform:translateY(-50%);font-family:'DejaVu Sans Condensed','DejaVu Sans','Liberation Sans',sans-serif;-webkit-text-stroke:0;">2</span>
<span class="t" style="top:460.27px;font-size:7.3px;color:#eceef0;left:1344.8px;transform:translateY(-50%);letter-spacing:-0.25px;font-family:'DejaVu Sans Condensed','DejaVu Sans','Liberation Sans',sans-serif;-webkit-text-stroke:0;">20</span>
<span class="t" style="top:460.27px;font-size:7.3px;color:#eceef0;left:1361.3px;transform:translateY(-50%);letter-spacing:-0.25px;font-family:'DejaVu Sans Condensed','DejaVu Sans','Liberation Sans',sans-serif;-webkit-text-stroke:0;">ISO 4015</span>
<span class="t" style="top:460.27px;font-size:7.3px;color:#eceef0;left:1478.2px;transform:translateY(-50%);font-family:'DejaVu Sans Condensed','DejaVu Sans','Liberation Sans',sans-serif;-webkit-text-stroke:0;">2</span>
<span class="t" style="top:472.13px;font-size:7.3px;color:#eceef0;left:1344.8px;transform:translateY(-50%);letter-spacing:-0.25px;font-family:'DejaVu Sans Condensed','DejaVu Sans','Liberation Sans',sans-serif;-webkit-text-stroke:0;">21</span>
<span class="t" style="top:472.13px;font-size:7.3px;color:#eceef0;left:1361.3px;transform:translateY(-50%);letter-spacing:-0.25px;font-family:'DejaVu Sans Condensed','DejaVu Sans','Liberation Sans',sans-serif;-webkit-text-stroke:0;">ISO 4762</span>
<span class="t" style="top:472.13px;font-size:7.3px;color:#eceef0;left:1478.2px;transform:translateY(-50%);font-family:'DejaVu Sans Condensed','DejaVu Sans','Liberation Sans',sans-serif;-webkit-text-stroke:0;">4</span>
<span class="t" style="top:483.99px;font-size:7.3px;color:#eceef0;left:1344.8px;transform:translateY(-50%);letter-spacing:-0.25px;font-family:'DejaVu Sans Condensed','DejaVu Sans','Liberation Sans',sans-serif;-webkit-text-stroke:0;">22</span>
<span class="t" style="top:483.99px;font-size:7.3px;color:#eceef0;left:1361.3px;transform:translateY(-50%);letter-spacing:-0.25px;font-family:'DejaVu Sans Condensed','DejaVu Sans','Liberation Sans',sans-serif;-webkit-text-stroke:0;">JIS B1176</span>
<span class="t" style="top:483.99px;font-size:7.3px;color:#eceef0;left:1478.2px;transform:translateY(-50%);font-family:'DejaVu Sans Condensed','DejaVu Sans','Liberation Sans',sans-serif;-webkit-text-stroke:0;">2</span>
<span class="t" style="top:495.84999999999997px;font-size:7.3px;color:#eceef0;left:1344.8px;transform:translateY(-50%);letter-spacing:-0.25px;font-family:'DejaVu Sans Condensed','DejaVu Sans','Liberation Sans',sans-serif;-webkit-text-stroke:0;">23</span>
<span class="t" style="top:495.84999999999997px;font-size:7.3px;color:#eceef0;left:1361.3px;transform:translateY(-50%);letter-spacing:-0.25px;font-family:'DejaVu Sans Condensed','DejaVu Sans','Liberation Sans',sans-serif;-webkit-text-stroke:0;">Misumi_MCOCGWK30-8-14</span>
<span class="t" style="top:495.84999999999997px;font-size:7.3px;color:#eceef0;left:1478.2px;transform:translateY(-50%);font-family:'DejaVu Sans Condensed','DejaVu Sans','Liberation Sans',sans-serif;-webkit-text-stroke:0;">1</span>
<span class="t" style="top:507.71px;font-size:7.3px;color:#eceef0;left:1344.8px;transform:translateY(-50%);letter-spacing:-0.25px;font-family:'DejaVu Sans Condensed','DejaVu Sans','Liberation Sans',sans-serif;-webkit-text-stroke:0;">24</span>
<span class="t" style="top:507.71px;font-size:7.3px;color:#eceef0;left:1361.3px;transform:translateY(-50%);letter-spacing:-0.25px;font-family:'DejaVu Sans Condensed','DejaVu Sans','Liberation Sans',sans-serif;-webkit-text-stroke:0;">Stepperonline_57BLR50-24-01-HG50</span>
<span class="t" style="top:507.71px;font-size:7.3px;color:#eceef0;left:1478.2px;transform:translateY(-50%);font-family:'DejaVu Sans Condensed','DejaVu Sans','Liberation Sans',sans-serif;-webkit-text-stroke:0;">1</span>
<div style="left:1343.6px;top:761.5px;width:218.4px;height:73px;background:#2c2e33"></div>
<div style="left:1343.6px;top:761.5px;width:206px;height:11.5px;background:#45484e"></div>
<div style="left:1549.5px;top:761.5px;width:12.5px;height:73px;background:#c9c9c9"></div>
<div style="left:1549.5px;top:761.5px;width:12.5px;height:11px;background:#f4f4f4"></div>
<div style="left:1346.3px;top:764.8px;width:4.6px;height:4.6px;background:#e8e8e8"></div>
<div style="left:1347.3px;top:766.7px;width:2.6px;height:0.9px;background:#555"></div>
<span class="t b" style="top:767.5px;font-size:7.3px;color:#f2f3f5;left:1355px;transform:translateY(-50%);letter-spacing:-0.22px;font-family:'DejaVu Sans Condensed','DejaVu Sans','Liberation Sans',sans-serif;-webkit-text-stroke:0;">Bill of materials properties</span>
<div style="left:1354px;top:773.0px;width:195.5px;height:0.8px;background:#24262a"></div>
<span class="t" style="top:778.89px;font-size:7.3px;color:#e6e7ea;left:1355.3px;transform:translateY(-50%);letter-spacing:-0.25px;font-family:'DejaVu Sans Condensed','DejaVu Sans','Liberation Sans',sans-serif;-webkit-text-stroke:0;">Title</span>
<span class="t" style="top:778.89px;font-size:7.3px;color:#e6e7ea;left:1454.5px;transform:translateY(-50%);letter-spacing:-0.36px;font-family:'DejaVu Sans Condensed','DejaVu Sans','Liberation Sans',sans-serif;-webkit-text-stroke:0;">Bill of Materials &lt;NAME&gt;</span>
<div style="left:1354px;top:784.18px;width:195.5px;height:0.8px;background:#24262a"></div>
<span class="t" style="top:790.0699999999999px;font-size:7.3px;color:#e6e7ea;left:1355.3px;transform:translateY(-50%);letter-spacing:-0.25px;font-family:'DejaVu Sans Condensed','DejaVu Sans','Liberation Sans',sans-serif;-webkit-text-stroke:0;">Type</span>
<span class="t" style="top:790.0699999999999px;font-size:7.3px;color:#e6e7ea;left:1454.5px;transform:translateY(-50%);letter-spacing:-0.36px;font-family:'DejaVu Sans Condensed','DejaVu Sans','Liberation Sans',sans-serif;-webkit-text-stroke:0;">Top level</span>
<div style="left:1354px;top:795.36px;width:195.5px;height:0.8px;background:#24262a"></div>
<span class="t" style="top:801.25px;font-size:7.3px;color:#e6e7ea;left:1355.3px;transform:translateY(-50%);letter-spacing:-0.25px;font-family:'DejaVu Sans Condensed','DejaVu Sans','Liberation Sans',sans-serif;-webkit-text-stroke:0;">Property set</span>
<span class="t" style="top:801.25px;font-size:7.3px;color:#e6e7ea;left:1454.5px;transform:translateY(-50%);letter-spacing:-0.36px;font-family:'DejaVu Sans Condensed','DejaVu Sans','Liberation Sans',sans-serif;-webkit-text-stroke:0;">Mechanical only</span>
<div style="left:1354px;top:806.54px;width:195.5px;height:0.8px;background:#24262a"></div>
<span class="t" style="top:812.43px;font-size:7.3px;color:#e6e7ea;left:1355.3px;transform:translateY(-50%);letter-spacing:-0.25px;font-family:'DejaVu Sans Condensed','DejaVu Sans','Liberation Sans',sans-serif;-webkit-text-stroke:0;">Selection set</span>
<span class="t" style="top:812.43px;font-size:7.3px;color:#5d6168;left:1454.5px;transform:translateY(-50%);letter-spacing:-0.36px;font-family:'DejaVu Sans Condensed','DejaVu Sans','Liberation Sans',sans-serif;-webkit-text-stroke:0;">Entire model</span>
<div style="left:1354px;top:817.72px;width:195.5px;height:0.8px;background:#24262a"></div>
<span class="t" style="top:823.61px;font-size:7.3px;color:#e6e7ea;left:1355.3px;transform:translateY(-50%);letter-spacing:-0.25px;font-family:'DejaVu Sans Condensed','DejaVu Sans','Liberation Sans',sans-serif;-webkit-text-stroke:0;">Target component</span>
<span class="t" style="top:823.61px;font-size:7.3px;color:#e6e7ea;left:1455.5px;transform:translateY(-50%);letter-spacing:-0.36px;font-family:'DejaVu Sans Condensed','DejaVu Sans','Liberation Sans',sans-serif;-webkit-text-stroke:0;">&lt;Root component&gt;</span>
<div style="left:1354px;top:828.9px;width:195.5px;height:0.8px;background:#24262a"></div>
<span class="t" style="top:834.79px;font-size:7.3px;color:#e6e7ea;left:1355.3px;transform:translateY(-50%);letter-spacing:-0.25px;font-family:'DejaVu Sans Condensed','DejaVu Sans','Liberation Sans',sans-serif;-webkit-text-stroke:0;">Filter settings</span>
<span class="t" style="top:834.79px;font-size:7.3px;color:#5d6168;left:1455.5px;transform:translateY(-50%);letter-spacing:-0.36px;font-family:'DejaVu Sans Condensed','DejaVu Sans','Liberation Sans',sans-serif;-webkit-text-stroke:0;">&lt;Expand to configure&gt;</span>
<div style="left:1353.5px;top:773.0px;width:0.8px;height:62px;background:#24262a"></div>
<div style="left:1452px;top:773.0px;width:0.8px;height:62px;background:#24262a"></div>
<div style="left:1346.3px;top:831.5px;width:4.6px;height:4.6px;background:#e8e8e8"></div>
<div style="left:192px;top:136.3px;width:1146.5px;height:698px;background:#fafafa"></div><svg style="position:absolute;left:192px;top:136px;filter:blur(.3px)" width="1147" height="698" viewBox="192 136 1147 698" font-family="'Liberation Sans',sans-serif">
<rect x="192" y="136.3" width="1146.5" height="700" fill="#fafafa"/>
<path d="M217.2,136.3V140.5" stroke="#4a4a4a" stroke-width="1.3"/>
<path d="M217.2,165.2V834" stroke="#4a4a4a" stroke-width="1.3" stroke-dasharray="25.6 25.9"/>
<path d="M1269.3,136.3V140.5" stroke="#4a4a4a" stroke-width="1.3"/>
<path d="M1269.3,165.2V834" stroke="#4a4a4a" stroke-width="1.3" stroke-dasharray="25.6 25.9"/>
<path d="M1213.5,136.3V173" stroke="#7fd6a8" stroke-width="1"/><path d="M1178,137.5H1250" stroke="#f2b8b8" stroke-width="1"/><rect x="1210.5" y="136.3" width="6" height="3" fill="none" stroke="#777" stroke-width=".6"/>
<text x="282.6" y="715.8" font-size="17.5" fill="#86e0b4" font-family="'DejaVu Sans',sans-serif" font-weight="200">Y</text><path d="M288.2,722.3L288.2,736.0" stroke="#333" stroke-width="1.1" /><path d="M288.2,736.0L288.2,789.4" stroke="#8fe0b8" stroke-width="1.1" /><path d="M288.2,736.0L321.0,736.0" stroke="#f4a6a6" stroke-width="1.1" /><path d="M320.5,736l8.5,8.6h-8.5z" stroke="#555" stroke-width=".9" fill="none"/><path d="M329.0,744.6L329.0,789.4" stroke="#8fe0b8" stroke-width="1.1" /><path d="M288.2,789.4L329.0,789.4" stroke="#f4a6a6" stroke-width="1.1" /><path d="M329.0,789.4L356.0,789.4" stroke="#333" stroke-width="1.1" /><text x="296.8" y="782.3" font-size="16.5" fill="#5c5c5c" font-family="'DejaVu Sans',sans-serif" font-weight="200" transform="translate(296.8 0) scale(.92 1) translate(-296.8 0)">W</text><text x="362.5" y="796.2" font-size="19" fill="#f7aaaa" font-family="'DejaVu Sans',sans-serif" font-weight="200" transform="translate(362.5 0) scale(.92 1) translate(-362.5 0)">X</text>
<rect x="381.3" y="463.1" width="245.0" height="289.0" stroke="#222" stroke-width="1" fill="none" /><path d="M381.3,475.8L626.3,475.8" stroke="#222" stroke-width="0.9" /><path d="M381.3,486.7L626.3,486.7" stroke="#333" stroke-width="0.8" /><path d="M381.3,497.8L626.3,497.8" stroke="#333" stroke-width="0.8" /><path d="M381.3,508.8L626.3,508.8" stroke="#333" stroke-width="0.8" /><path d="M381.3,519.9L626.3,519.9" stroke="#333" stroke-width="0.8" /><path d="M381.3,530.9L626.3,530.9" stroke="#333" stroke-width="0.8" /><path d="M381.3,542.0L626.3,542.0" stroke="#333" stroke-width="0.8" /><path d="M381.3,553.0L626.3,553.0" stroke="#333" stroke-width="0.8" /><path d="M381.3,564.1L626.3,564.1" stroke="#333" stroke-width="0.8" /><path d="M381.3,575.2L626.3,575.2" stroke="#333" stroke-width="0.8" /><path d="M381.3,586.2L626.3,586.2" stroke="#333" stroke-width="0.8" /><path d="M381.3,597.3L626.3,597.3" stroke="#333" stroke-width="0.8" /><path d="M381.3,608.3L626.3,608.3" stroke="#333" stroke-width="0.8" /><path d="M381.3,619.4L626.3,619.4" stroke="#333" stroke-width="0.8" /><path d="M381.3,630.5L626.3,630.5" stroke="#333" stroke-width="0.8" /><path d="M381.3,641.5L626.3,641.5" stroke="#333" stroke-width="0.8" /><path d="M381.3,652.6L626.3,652.6" stroke="#333" stroke-width="0.8" /><path d="M381.3,663.6L626.3,663.6" stroke="#333" stroke-width="0.8" /><path d="M381.3,674.7L626.3,674.7" stroke="#333" stroke-width="0.8" /><path d="M381.3,685.8L626.3,685.8" stroke="#333" stroke-width="0.8" /><path d="M381.3,696.8L626.3,696.8" stroke="#333" stroke-width="0.8" /><path d="M381.3,707.9L626.3,707.9" stroke="#333" stroke-width="0.8" /><path d="M381.3,718.9L626.3,718.9" stroke="#333" stroke-width="0.8" /><path d="M381.3,730.0L626.3,730.0" stroke="#333" stroke-width="0.8" /><path d="M381.3,741.0L626.3,741.0" stroke="#333" stroke-width="0.8" /><path d="M381.3,752.1L626.3,752.1" stroke="#333" stroke-width="0.8" /><path d="M417.6,475.8L417.6,752.1" stroke="#333" stroke-width="0.8" /><path d="M571.6,475.8L571.6,752.1" stroke="#333" stroke-width="0.8" /><text x="503.79999999999995" y="472.8" font-size="10.5" text-anchor="middle" fill="#222" letter-spacing="-.06">Bill of Materials Alberts_Crusher</text><g font-size="7.6" text-anchor="middle" fill="#222"><text x="399.45000000000005" y="483.5">No.</text><text x="494.6" y="483.5">Component</text><text x="598.95" y="483.5">Quantity</text><text x="399.45000000000005" y="494.4">1</text><text x="494.6" y="494.4">001-60-20-0001</text><text x="598.95" y="494.4">1</text><text x="399.45000000000005" y="505.4">2</text><text x="494.6" y="505.4">001-60-20-0002</text><text x="598.95" y="505.4">2</text><text x="399.45000000000005" y="516.5">3</text><text x="494.6" y="516.5">001-60-20-0003</text><text x="598.95" y="516.5">1</text><text x="399.45000000000005" y="527.5">4</text><text x="494.6" y="527.5">001-60-20-0004</text><text x="598.95" y="527.5">1</text><text x="399.45000000000005" y="538.6">5</text><text x="494.6" y="538.6">001-60-20-0005</text><text x="598.95" y="538.6">1</text><text x="399.45000000000005" y="549.6">6</text><text x="494.6" y="549.6">001-60-21-0001</text><text x="598.95" y="549.6">1</text><text x="399.45000000000005" y="560.7">7</text><text x="494.6" y="560.7">001-60-21-0002</text><text x="598.95" y="560.7">5</text><text x="399.45000000000005" y="571.8">8</text><text x="494.6" y="571.8">001-60-21-0003</text><text x="598.95" y="571.8">4</text><text x="399.45000000000005" y="582.8">9</text><text x="494.6" y="582.8">001-60-21-0004</text><text x="598.95" y="582.8">2</text><text x="399.45000000000005" y="593.9">10</text><text x="494.6" y="593.9">001-60-21-0005</text><text x="598.95" y="593.9">8</text><text x="399.45000000000005" y="604.9">11</text><text x="494.6" y="604.9">DIN 125-A</text><text x="598.95" y="604.9">2</text><text x="399.45000000000005" y="616.0">12</text><text x="494.6" y="616.0">DIN 912</text><text x="598.95" y="616.0">4</text><text x="399.45000000000005" y="627.1">13</text><text x="494.6" y="627.1">DIN 912</text><text x="598.95" y="627.1">4</text><text x="399.45000000000005" y="638.1">14</text><text x="494.6" y="638.1">DIN 934-B</text><text x="598.95" y="638.1">1</text><text x="399.45000000000005" y="649.2">15</text><text x="494.6" y="649.2">DIN 934-B-FINE</text><text x="598.95" y="649.2">1</text><text x="399.45000000000005" y="660.2">16</text><text x="494.6" y="660.2">DIN 7984</text><text x="598.95" y="660.2">2</text><text x="399.45000000000005" y="671.3">17</text><text x="494.6" y="671.3">DIN471-8</text><text x="598.95" y="671.3">1</text><text x="399.45000000000005" y="682.4">18</text><text x="494.6" y="682.4">DIN6885-A-3x3x12-A5</text><text x="598.95" y="682.4">1</text><text x="399.45000000000005" y="693.4">19</text><text x="494.6" y="693.4">Igus_A181FM-1618-12</text><text x="598.95" y="693.4">2</text><text x="399.45000000000005" y="704.5">20</text><text x="494.6" y="704.5">ISO 4015</text><text x="598.95" y="704.5">2</text><text x="399.45000000000005" y="715.5">21</text><text x="494.6" y="715.5">ISO 4762</text><text x="598.95" y="715.5">4</text><text x="399.45000000000005" y="726.6">22</text><text x="494.6" y="726.6">JIS B1176</text><text x="598.95" y="726.6">2</text><text x="399.45000000000005" y="737.6">23</text><text x="494.6" y="737.6">Misumi_MCOCGWK30-8-14</text><text x="598.95" y="737.6">1</text><text x="399.45000000000005" y="748.7">24</text><text x="494.6" y="748.7">Stepperonline_57BLR50-24-01-HG50</text><text x="598.95" y="748.7">1</text></g>
<clipPath id="cb"><circle cx="589.1" cy="290.8" r="68.7"/></clipPath><g clip-path="url(#cb)" fill="none"><path d="M538.8,228.2L571.8,228.2" stroke="#262626" stroke-width="0.9" /><path d="M605.0,228.2L640.5,228.2" stroke="#262626" stroke-width="0.9" /><path d="M571.8,228.2L571.8,238.2" stroke="#262626" stroke-width="0.9" /><path d="M605.0,228.2L605.0,238.2" stroke="#262626" stroke-width="0.9" /><path d="M574.3,229.2L574.3,235.9" stroke="#262626" stroke-width="0.9" /><path d="M602.9,229.2L602.9,235.9" stroke="#262626" stroke-width="0.9" /><path d="M574.3,229.2L602.9,229.2" stroke="#262626" stroke-width="1.3" /><path d="M551.2,235.9L574.3,235.9" stroke="#262626" stroke-width="0.9" /><path d="M602.9,235.9L625.1,235.9" stroke="#262626" stroke-width="0.9" /><path d="M551.2,228.2L551.2,238.2" stroke="#262626" stroke-width="0.9" /><path d="M625.1,228.2L625.1,238.2" stroke="#262626" stroke-width="0.9" /><path d="M582.9,222.5L594.4,222.5" stroke="#262626" stroke-width="0.9" /><path d="M594.4,222.5L594.4,228.2" stroke="#262626" stroke-width="0.9" /><rect x="549.7" y="238.2" width="76.0" height="11.1" stroke="#262626" stroke-width="0.9" fill="none" /><rect x="550.3" y="249.3" width="24.9" height="30.1" stroke="#262626" stroke-width="0.9" fill="none" /><rect x="601.1" y="249.3" width="24.0" height="30.1" stroke="#262626" stroke-width="0.9" fill="none" /><path d="M575.2,249.3L578.7,249.3" stroke="#262626" stroke-width="0.9" /><path d="M575.2,279.4L578.7,279.4" stroke="#262626" stroke-width="0.9" /><circle cx="566.2" cy="264.7" r="5.8" stroke="#262626" stroke-width=".9"/><circle cx="567.2" cy="264.7" r="4" stroke="#262626" stroke-width=".9"/><path d="M578.5,249.3L578.5,362.0" stroke="#262626" stroke-width="1.05" /><path d="M597.6,282.0L597.6,362.0" stroke="#262626" stroke-width="1.05" /><rect x="581.0" y="239.7" width="20.1" height="10.6" stroke="#262626" stroke-width="0.9" fill="none" /><rect x="584.4" y="241.1" width="13.8" height="9.2" stroke="#262626" stroke-width="0.9" fill="none" /><rect x="593.5" y="253.7" width="6.7" height="28.2" stroke="#262626" stroke-width="0.9" fill="none" /><path d="M600.2,256.0L593.5,262.7" stroke="#262626" stroke-width="0.7" /><path d="M600.2,265.0L593.5,271.7" stroke="#262626" stroke-width="0.7" /><path d="M600.2,274.0L593.5,280.7" stroke="#262626" stroke-width="0.7" /><clipPath id="cs"><path d="M578.7,250.3H593.5V281.9H598.2V400H578.7z"/></clipPath><g clip-path="url(#cs)"><path d="M578.5,346.1L597.4,365.0" stroke="#262626" stroke-width="1.0" /><path d="M578.5,327.2L597.6,346.3" stroke="#262626" stroke-width="1.0" /><path d="M578.5,308.3L597.6,327.4" stroke="#262626" stroke-width="1.0" /><path d="M578.5,289.4L597.6,308.5" stroke="#262626" stroke-width="1.0" /><path d="M578.5,270.5L597.6,289.6" stroke="#262626" stroke-width="1.0" /><path d="M578.5,251.6L597.6,270.7" stroke="#262626" stroke-width="1.0" /><path d="M578.5,232.7L597.6,251.8" stroke="#262626" stroke-width="1.0" /><path d="M589.4,224.7L597.6,232.9" stroke="#262626" stroke-width="1.0" /></g><path d="M556.0,279.4L556.0,310.5" stroke="#262626" stroke-width="1.05" /><path d="M577.0,279.4L577.0,308.4" stroke="#262626" stroke-width="1.05" /><path d="M620.3,279.4L620.3,310.5" stroke="#262626" stroke-width="1.05" /><path d="M600.2,282.0L600.2,308.4" stroke="#262626" stroke-width="1.05" /><path d="M523.6,312.0L529.9,312.0" stroke="#262626" stroke-width="1.0" /><path d="M529.9,329.6L529.9,312.0L531.2,310.9L565.4,310.5" stroke="#262626" stroke-width="1.0" fill="none"/><path d="M534.4,311.1L534.4,330.0" stroke="#262626" stroke-width="1.0" /><path d="M531.2,311.6L531.2,326.0" stroke="#262626" stroke-width="1.0" /><path d="M553.3,310.7L553.3,344.4" stroke="#262626" stroke-width="1.0" /><path d="M556.0,290.0L556.0,310.5" stroke="#262626" stroke-width="1.0" /><path d="M565.4,333.2L565.4,308.4L578.5,308.4" stroke="#262626" stroke-width="1.0" fill="none"/><path d="M568.6,309.3L568.6,338.6L558.7,338.6" stroke="#262626" stroke-width="1.0" fill="none"/><path d="M565.9,309.1H568.6V338.4H559.1L558.2,336.0H565.9z" fill="#d2d2d2" stroke="none"/><path d="M553.3,335.0L563.6,335.0L565.4,333.2" stroke="#262626" stroke-width="1.0" fill="none"/><path d="M557.8,335.9L565.9,335.9L565.9,309.1" stroke="#262626" stroke-width="1.0" fill="none"/><path d="M568.6,320.3L578.5,320.3" stroke="#262626" stroke-width="1.0" /><path d="M541.1,337.7L553.3,337.7" stroke="#262626" stroke-width="1.0" /><path d="M546.1,344.4L574.0,344.4" stroke="#262626" stroke-width="1.0" /><path d="M563.6,338.6L563.6,344.4" stroke="#262626" stroke-width="1.0" /><path d="M578.5,339.0L573.5,339.0L573.5,344.0" stroke="#262626" stroke-width="1.0" fill="none"/><path d="M573.5,343.1L578.5,343.1" stroke="#262626" stroke-width="1.0" /><path d="M575.3,344.0L575.3,357.4" stroke="#262626" stroke-width="1.0" /><path d="M556.9,351.6L574.9,351.6" stroke="#262626" stroke-width="1.0" /><path d="M574.0,357.4L574.0,352.1L565.0,352.1L563.2,354.7" stroke="#262626" stroke-width="1.0" fill="none"/><path d="M534.8,311.6L553.3,330.0" stroke="#262626" stroke-width="1.0" /><path d="M553.3,327.8L565.9,315.2" stroke="#262626" stroke-width="1.0" /><path d="M568.6,330.5L578.5,320.6" stroke="#262626" stroke-width="1.0" /><path d="M533.5,329.6L542.5,337.7" stroke="#262626" stroke-width="1.0" /><path d="M566.8,344.4L581.2,358.3" stroke="#262626" stroke-width="1.0" /><path d="M549.7,344.9L556.0,351.2" stroke="#262626" stroke-width="1.0" /><path d="M524.5,312.5L529.9,325.1" stroke="#262626" stroke-width="1.0" /><path d="M597.5,308.4L610.4,308.4L610.4,333.2" stroke="#262626" stroke-width="1.0" fill="none"/><path d="M607.2,309.3L607.2,338.6L617.6,338.6" stroke="#262626" stroke-width="1.0" fill="none"/><path d="M607.7,309.1H610.2V336.0H617.6L616.7,338.4H607.7z" fill="#d2d2d2" stroke="none"/><path d="M610.4,310.9L621.6,310.9L623.0,312.0L623.0,334.1L621.2,335.9L612.6,335.9L610.4,333.2" stroke="#262626" stroke-width="1.0" fill="none"/><path d="M620.3,290.0L620.3,310.7" stroke="#262626" stroke-width="1.0" /><path d="M597.5,320.3L607.2,320.3" stroke="#262626" stroke-width="1.0" /><path d="M597.5,339.0L602.7,339.0L602.7,343.1L597.5,343.1" stroke="#262626" stroke-width="1.0" fill="none"/><path d="M612.6,338.6L612.6,344.4" stroke="#262626" stroke-width="1.0" /><path d="M600.0,344.4L631.1,344.4" stroke="#262626" stroke-width="1.0" /><path d="M600.0,343.1L600.0,358.3" stroke="#262626" stroke-width="1.0" /><path d="M600.9,351.6L618.9,351.6" stroke="#262626" stroke-width="1.0" /><path d="M602.3,352.1L602.3,357.4" stroke="#262626" stroke-width="1.0" /><path d="M610.4,325.5L623.0,312.9" stroke="#262626" stroke-width="1.0" /><path d="M597.5,338.6L607.2,328.7" stroke="#262626" stroke-width="1.0" /><path d="M603.6,344.4L610.8,352.1" stroke="#262626" stroke-width="1.0" /><path d="M623.4,344.4L627.0,348.0" stroke="#262626" stroke-width="1.0" /><path d="M613.5,352.1L618.9,357.4" stroke="#262626" stroke-width="1.0" /><circle cx="577.6" cy="319.9" r="1.1" fill="#222"/><circle cx="598.7" cy="319.7" r="1.1" fill="#222"/></g><circle cx="589.1" cy="290.8" r="68.7" stroke="#262626" stroke-width="1" fill="none"/><text x="538" y="397.8" font-size="29" fill="#111">B (6.00)</text>
<circle cx="732.1" cy="247.3" r="16.3" stroke="#262626" stroke-width=".9" fill="none"/><text x="732.1" y="253.20000000000002" font-size="16.2" text-anchor="middle" fill="#111">4</text><circle cx="770.5" cy="247.3" r="16.3" stroke="#262626" stroke-width=".9" fill="none"/><text x="770.5" y="253.20000000000002" font-size="16.2" text-anchor="middle" fill="#111">16</text><circle cx="808.3" cy="247.3" r="16.3" stroke="#262626" stroke-width=".9" fill="none"/><text x="808.3" y="253.20000000000002" font-size="16.2" text-anchor="middle" fill="#111">3</text><circle cx="846" cy="247.3" r="16.3" stroke="#262626" stroke-width=".9" fill="none"/><text x="846" y="253.20000000000002" font-size="16.2" text-anchor="middle" fill="#111">24</text><circle cx="884" cy="247.3" r="16.3" stroke="#262626" stroke-width=".9" fill="none"/><text x="884" y="253.20000000000002" font-size="16.2" text-anchor="middle" fill="#111">12</text><circle cx="922.3" cy="247.3" r="16.3" stroke="#262626" stroke-width=".9" fill="none"/><text x="922.3" y="253.20000000000002" font-size="16.2" text-anchor="middle" fill="#111">2</text><circle cx="923" cy="284.6" r="16.3" stroke="#262626" stroke-width=".9" fill="none"/><text x="923" y="290.5" font-size="16.2" text-anchor="middle" fill="#111">5</text><circle cx="923" cy="322.3" r="16.3" stroke="#262626" stroke-width=".9" fill="none"/><text x="923" y="328.2" font-size="16.2" text-anchor="middle" fill="#111">18</text><circle cx="923" cy="360.0" r="16.3" stroke="#262626" stroke-width=".9" fill="none"/><text x="923" y="365.9" font-size="16.2" text-anchor="middle" fill="#111">19</text><circle cx="923" cy="397.8" r="16.3" stroke="#262626" stroke-width=".9" fill="none"/><text x="923" y="403.7" font-size="16.2" text-anchor="middle" fill="#111">17</text><circle cx="923" cy="435.5" r="16.3" stroke="#262626" stroke-width=".9" fill="none"/><text x="923" y="441.4" font-size="16.2" text-anchor="middle" fill="#111">1</text><circle cx="923" cy="473.2" r="16.3" stroke="#262626" stroke-width=".9" fill="none"/><text x="923" y="479.09999999999997" font-size="16.2" text-anchor="middle" fill="#111">6</text><circle cx="923" cy="510.9" r="16.3" stroke="#262626" stroke-width=".9" fill="none"/><text x="923" y="516.8" font-size="16.2" text-anchor="middle" fill="#111">7</text><circle cx="923" cy="548.6" r="16.3" stroke="#262626" stroke-width=".9" fill="none"/><text x="923" y="554.5" font-size="16.2" text-anchor="middle" fill="#111">10</text><circle cx="923" cy="586.4" r="16.3" stroke="#262626" stroke-width=".9" fill="none"/><text x="923" y="592.3" font-size="16.2" text-anchor="middle" fill="#111">8</text><circle cx="923" cy="624.1" r="16.3" stroke="#262626" stroke-width=".9" fill="none"/><text x="923" y="630.0" font-size="16.2" text-anchor="middle" fill="#111">9</text><circle cx="923" cy="661.8" r="16.3" stroke="#262626" stroke-width=".9" fill="none"/><text x="923" y="667.6999999999999" font-size="16.2" text-anchor="middle" fill="#111">20</text><circle cx="923" cy="699.5" r="16.3" stroke="#262626" stroke-width=".9" fill="none"/><text x="923" y="705.4" font-size="16.2" text-anchor="middle" fill="#111">11</text><circle cx="923" cy="737.2" r="16.3" stroke="#262626" stroke-width=".9" fill="none"/><text x="923" y="743.1" font-size="16.2" text-anchor="middle" fill="#111">15</text><circle cx="923" cy="775.0" r="16.3" stroke="#262626" stroke-width=".9" fill="none"/><text x="923" y="780.9" font-size="16.2" text-anchor="middle" fill="#111">14</text><path d="M731.4,263.3L717.7,597.5" stroke="#262626" stroke-width="0.8" /><path d="M717.7,597.5L715.6,580.4L721.2,580.6z" fill="#111" stroke="none"/><path d="M770.6,263.3L771.3,451.0" stroke="#262626" stroke-width="0.8" /><path d="M771.3,451.0L768.4,438.0L774.0,438.0z" fill="#111" stroke="none"/><path d="M806.2,263.2L781.0,461.0" stroke="#262626" stroke-width="0.8" /><path d="M781.0,461.0L780.1,445.8L785.7,446.5z" fill="#111" stroke="none"/><path d="M840.7,262.4L800.0,381.0" stroke="#262626" stroke-width="0.8" /><path d="M800.0,381.0L802.2,365.9L807.5,367.7z" fill="#111" stroke="none"/><path d="M877.9,262.1L769.5,529.0" stroke="#262626" stroke-width="0.8" /><path d="M769.5,529.0L772.2,515.0L777.4,517.1z" fill="#111" stroke="none"/><path d="M915.3,261.8L834.0,441.0" stroke="#262626" stroke-width="0.8" /><path d="M834.0,441.0L837.2,427.1L842.3,429.4z" fill="#111" stroke="none"/><path d="M914.3,299.0L805.6,501.5" stroke="#262626" stroke-width="0.8" /><path d="M805.6,501.5L809.8,487.8L814.7,490.5z" fill="#111" stroke="none"/><path d="M913.0,335.9L789.0,523.0" stroke="#262626" stroke-width="0.8" /><path d="M789.0,523.0L794.4,509.8L799.1,512.9z" fill="#111" stroke="none"/><path d="M911.8,372.8L786.7,529.5" stroke="#262626" stroke-width="0.8" /><path d="M786.7,529.5L793.2,516.8L797.6,520.3z" fill="#111" stroke="none"/><path d="M911.2,410.0L806.0,528.5" stroke="#262626" stroke-width="0.8" /><path d="M806.0,528.5L813.2,516.2L817.4,519.9z" fill="#111" stroke="none"/><path d="M911.8,448.2L796.0,593.0" stroke="#262626" stroke-width="0.8" /><path d="M796.0,593.0L804.4,578.0L808.8,581.5z" fill="#111" stroke="none"/><path d="M909.9,484.1L779.0,602.7" stroke="#262626" stroke-width="0.8" /><path d="M779.0,602.7L788.2,590.6L792.0,594.7z" fill="#111" stroke="none"/><path d="M908.5,520.1L793.5,598.0" stroke="#262626" stroke-width="0.8" /><path d="M793.5,598.0L806.0,586.1L809.1,590.8z" fill="#111" stroke="none"/><path d="M906.9,554.7L792.3,600.3" stroke="#262626" stroke-width="0.8" /><path d="M792.3,600.3L805.2,592.1L807.3,597.4z" fill="#111" stroke="none"/><path d="M906.0,589.3L793.5,610.0" stroke="#262626" stroke-width="0.8" /><path d="M793.5,610.0L807.7,604.5L808.8,610.0z" fill="#111" stroke="none"/><path d="M906.2,628.0L793.5,655.5" stroke="#262626" stroke-width="0.8" /><path d="M793.5,655.5L807.4,649.2L808.7,654.7z" fill="#111" stroke="none"/><path d="M905.7,662.2L820.0,664.0" stroke="#262626" stroke-width="0.8" /><path d="M820.0,664.0L836.9,660.8L837.1,666.4z" fill="#111" stroke="none"/><path d="M906.7,694.0L821.0,663.4" stroke="#262626" stroke-width="0.8" /><path d="M821.0,663.4L836.1,665.8L834.2,671.1z" fill="#111" stroke="none"/><path d="M907.5,729.8L800.7,674.7" stroke="#262626" stroke-width="0.8" /><path d="M800.7,674.7L815.3,679.1L812.7,684.1z" fill="#111" stroke="none"/><path d="M909.0,765.2L800.0,683.5" stroke="#262626" stroke-width="0.8" /><path d="M800.0,683.5L813.7,690.3L810.3,694.7z" fill="#111" stroke="none"/><path d="M765.5,444.5V305H836V444.5" stroke="#262626" stroke-width="1.05" fill="none"/><path d="M765.5,438.7L767.8,441.0" stroke="#262626" stroke-width="0.7" /><path d="M765.5,420.7L785.8,441.0" stroke="#262626" stroke-width="0.7" /><path d="M765.5,402.7L803.8,441.0" stroke="#262626" stroke-width="0.7" /><path d="M765.5,384.7L821.8,441.0" stroke="#262626" stroke-width="0.7" /><path d="M765.5,366.7L836.0,437.2" stroke="#262626" stroke-width="0.7" /><path d="M765.5,348.7L836.0,419.2" stroke="#262626" stroke-width="0.7" /><path d="M765.5,330.7L836.0,401.2" stroke="#262626" stroke-width="0.7" /><path d="M765.5,312.7L836.0,383.2" stroke="#262626" stroke-width="0.7" /><path d="M775.8,305.0L836.0,365.2" stroke="#262626" stroke-width="0.7" /><path d="M793.8,305.0L836.0,347.2" stroke="#262626" stroke-width="0.7" /><path d="M811.8,305.0L836.0,329.2" stroke="#262626" stroke-width="0.7" /><path d="M829.8,305.0L836.0,311.2" stroke="#262626" stroke-width="0.7" /><rect x="765.5" y="444.5" width="25.5" height="6.0" stroke="#262626" stroke-width="1.05" fill="none" /><rect x="810.5" y="444.5" width="25.5" height="6.0" stroke="#262626" stroke-width="1.05" fill="none" /><rect x="766.0" y="441.0" width="6.0" height="13.0" stroke="#262626" stroke-width="1.05" fill="none" /><rect x="829.0" y="441.0" width="6.0" height="13.0" stroke="#262626" stroke-width="1.05" fill="none" /><path d="M765.5,452.0L781.5,487.0" stroke="#262626" stroke-width="1.05" /><path d="M836.0,452.0L819.0,487.0" stroke="#262626" stroke-width="1.05" /><path d="M791.0,444.5L791.0,468.0" stroke="#262626" stroke-width="1.05" /><path d="M810.5,444.5L810.5,468.0" stroke="#262626" stroke-width="1.05" /><rect x="782.0" y="468.0" width="10.0" height="15.0" stroke="#262626" stroke-width="1.05" fill="none" /><rect x="809.0" y="468.0" width="10.0" height="15.0" stroke="#262626" stroke-width="1.05" fill="none" /><circle cx="788" cy="476" r="1.8" stroke="#222" stroke-width=".8" fill="none"/><rect x="812.0" y="470.5" width="4.5" height="10.0" stroke="#111" stroke-width="0.9" fill="none" /><path d="M781.5,483.5L819.5,483.5" stroke="#111" stroke-width="1.4" /><rect x="781.5" y="485.0" width="38.0" height="9.5" stroke="#262626" stroke-width="1.05" fill="none" /><rect x="797.0" y="488.5" width="9.0" height="6.0" stroke="#262626" stroke-width="1.05" fill="none" /><rect x="782.0" y="494.5" width="11.0" height="16.0" stroke="#262626" stroke-width="1.05" fill="none" /><rect x="806.5" y="494.5" width="12.0" height="16.0" stroke="#262626" stroke-width="1.05" fill="none" /><circle cx="789.5" cy="502" r="2" stroke="#222" stroke-width=".8" fill="none"/><path d="M795.5,494.5L795.5,535.0" stroke="#262626" stroke-width="1.05" /><path d="M803.0,494.5L803.0,535.0" stroke="#262626" stroke-width="1.05" /><path d="M784.0,510.5L784.0,535.0" stroke="#262626" stroke-width="1.05" /><path d="M816.5,510.5L816.5,535.0" stroke="#262626" stroke-width="1.05" /><circle cx="800.6" cy="515.8" r="34.4" stroke="#262626" stroke-width=".8" fill="none"/><path d="M835.0,517.5L847.0,519.5" stroke="#262626" stroke-width="0.8" /><text x="855.5" y="531" font-size="29" fill="#111">B</text><rect x="766.5" y="528.0" width="5.5" height="8.0" stroke="#262626" stroke-width="1.05" fill="none" /><rect x="808.5" y="526.0" width="5.0" height="10.0" stroke="#262626" stroke-width="0.9" fill="none" /><path d="M767,536H760L657.5,567V627L760,659H767" stroke="#2e2e2e" stroke-width="1" fill="none"/><path d="M760,537.5L659,568.5V625.5L760,657.5" stroke="#555" stroke-width=".6" fill="none"/><path d="M772.5,535.0L772.5,657.0" stroke="#262626" stroke-width="1.05" /><path d="M783.2,535.0L783.2,657.0" stroke="#262626" stroke-width="1.05" /><path d="M793.0,520.0L793.0,670.0" stroke="#262626" stroke-width="1.05" /><path d="M806.3,520.0L806.3,670.0" stroke="#262626" stroke-width="1.05" /><path d="M811.5,535.0L811.5,657.0" stroke="#262626" stroke-width="1.05" /><path d="M786.5,560.0L786.5,600.0" stroke="#262626" stroke-width="0.6" /><path d="M786.5,625.0L786.5,657.0" stroke="#262626" stroke-width="0.6" /><path d="M809.0,535.0L809.0,657.0" stroke="#262626" stroke-width="0.5" /><path d="M793.0,649.0L806.3,662.3" stroke="#262626" stroke-width="0.8" /><path d="M793.0,630.0L806.3,643.3" stroke="#262626" stroke-width="0.8" /><path d="M793.0,611.0L806.3,624.3" stroke="#262626" stroke-width="0.8" /><path d="M793.0,592.0L806.3,605.3" stroke="#262626" stroke-width="0.8" /><path d="M793.0,573.0L806.3,586.3" stroke="#262626" stroke-width="0.8" /><path d="M793.0,554.0L806.3,567.3" stroke="#262626" stroke-width="0.8" /><path d="M794.0,536.0L806.3,548.3" stroke="#262626" stroke-width="0.8" /><path d="M811.5,547.8L806.3,553.0" stroke="#262626" stroke-width="0.5" /><path d="M811.5,560.8L806.3,566.0" stroke="#262626" stroke-width="0.5" /><path d="M811.5,573.8L806.3,579.0" stroke="#262626" stroke-width="0.5" /><path d="M811.5,586.8L806.3,592.0" stroke="#262626" stroke-width="0.5" /><path d="M811.5,599.8L806.3,605.0" stroke="#262626" stroke-width="0.5" /><path d="M811.5,612.8L806.3,618.0" stroke="#262626" stroke-width="0.5" /><path d="M811.5,625.8L806.3,631.0" stroke="#262626" stroke-width="0.5" /><path d="M811.5,638.8L806.3,644.0" stroke="#262626" stroke-width="0.5" /><path d="M811.5,651.8L807.3,656.0" stroke="#262626" stroke-width="0.5" /><rect x="757.0" y="541.7" width="36.5" height="3.2" stroke="#262626" stroke-width="0.8" fill="#fafafa" /><rect x="806.7" y="541.7" width="30.3" height="3.2" stroke="#262626" stroke-width="0.8" fill="#fafafa" /><rect x="765.0" y="555.4" width="28.5" height="3.2" stroke="#262626" stroke-width="0.8" fill="#fafafa" /><rect x="806.7" y="555.4" width="13.3" height="3.2" stroke="#262626" stroke-width="0.8" fill="#fafafa" /><rect x="812.7" y="595.9" width="14.3" height="3.2" stroke="#262626" stroke-width="0.8" fill="#fafafa" /><rect x="812.7" y="609.0" width="28.3" height="3.2" stroke="#262626" stroke-width="0.8" fill="#fafafa" /><rect x="757.0" y="622.7" width="36.5" height="3.2" stroke="#262626" stroke-width="0.8" fill="#fafafa" /><rect x="806.7" y="622.7" width="30.3" height="3.2" stroke="#262626" stroke-width="0.8" fill="#fafafa" /><rect x="765.0" y="636.4" width="28.5" height="3.2" stroke="#262626" stroke-width="0.8" fill="#fafafa" /><rect x="806.7" y="636.4" width="13.3" height="3.2" stroke="#262626" stroke-width="0.8" fill="#fafafa" /><path d="M772.5,550.5L793.0,550.5" stroke="#262626" stroke-width="0.8" /><path d="M772.5,562.4L793.0,562.4" stroke="#262626" stroke-width="0.8" /><path d="M772.5,574.2L793.0,574.2" stroke="#262626" stroke-width="0.8" /><path d="M772.5,585.0L793.0,585.0" stroke="#262626" stroke-width="0.8" /><path d="M772.5,592.6L793.0,592.6" stroke="#262626" stroke-width="0.8" /><path d="M772.5,603.4L793.0,603.4" stroke="#262626" stroke-width="0.8" /><path d="M772.5,613.1L793.0,613.1" stroke="#262626" stroke-width="0.8" /><path d="M772.5,618.5L793.0,618.5" stroke="#262626" stroke-width="0.8" /><path d="M772.5,630.4L793.0,630.4" stroke="#262626" stroke-width="0.8" /><path d="M772.5,642.2L793.0,642.2" stroke="#262626" stroke-width="0.8" /><path d="M772.5,650.9L793.0,650.9" stroke="#262626" stroke-width="0.8" /><path d="M783.2,567.0L793.0,567.0" stroke="#262626" stroke-width="0.6" /><path d="M783.2,580.0L793.0,580.0" stroke="#262626" stroke-width="0.6" /><path d="M783.2,589.0L793.0,589.0" stroke="#262626" stroke-width="0.6" /><path d="M783.2,598.0L793.0,598.0" stroke="#262626" stroke-width="0.6" /><path d="M783.2,608.0L793.0,608.0" stroke="#262626" stroke-width="0.6" /><path d="M783.2,647.0L793.0,647.0" stroke="#262626" stroke-width="0.6" /><rect x="766.5" y="657.0" width="7.0" height="11.0" stroke="#262626" stroke-width="1.05" fill="none" /><path d="M773.0,657.0L793.5,657.0" stroke="#262626" stroke-width="1.05" /><path d="M773.0,668.0L812.7,668.0" stroke="#262626" stroke-width="1.05" /><rect x="789.0" y="657.0" width="5.0" height="11.0" stroke="#262626" stroke-width="0.7" fill="none" /><rect x="812.7" y="657.5" width="5.0" height="12.0" stroke="#262626" stroke-width="1.05" fill="none" /><rect x="817.7" y="659.5" width="4.0" height="8.0" stroke="#262626" stroke-width="1.05" fill="none" /><rect x="796.0" y="670.0" width="9.5" height="27.5" stroke="#262626" stroke-width="1.05" fill="none" /><rect x="788.5" y="679.0" width="17.0" height="9.5" stroke="#262626" stroke-width="0.9" fill="none" rx="1.5"/><path d="M796.0,674.0L805.5,674.0" stroke="#262626" stroke-width="0.7" /><text x="684" y="750.8" font-size="29" fill="#111">A-A (3.00)</text>
<path d="M1041.8,280.5L1041.8,700.0" stroke="#262626" stroke-width="0.9" /><text x="1031.8" y="276.3" font-size="29" fill="#111">A</text><text x="1031.8" y="737" font-size="29" fill="#111">A</text><path d="M1041.8,290.8L1083.0,290.8" stroke="#262626" stroke-width="1" /><path d="M1041.8,290.8l20.5,-3.2v6.4z" fill="#111"/><path d="M1041.8,702.3L1083.0,702.3" stroke="#262626" stroke-width="1" /><path d="M1041.8,702.3l20.5,-3.2v6.4z" fill="#111"/><path d="M1005.9,447.8V305.2H1077.1V447.8z" stroke="#262626" stroke-width="1.1" fill="none"/><path d="M1005.9,365.2L1077.1,365.2" stroke="#262626" stroke-width="1.05" /><path d="M1005.9,377.2L1077.1,377.2" stroke="#262626" stroke-width="1.05" /><path d="M1012.4,365.2L1012.4,377.2" stroke="#262626" stroke-width="1.05" /><path d="M1071.1,365.2L1071.1,377.2" stroke="#262626" stroke-width="1.05" /><path d="M1005.9,429.9L1077.1,429.9" stroke="#262626" stroke-width="1.05" /><path d="M1005.9,441.1L1077.1,441.1" stroke="#262626" stroke-width="1.05" /><rect x="1007.7" y="425.5" width="9.4" height="4.4" stroke="#262626" stroke-width="0.9" fill="none" /><rect x="1010.2" y="429.9" width="4.6" height="24.6" stroke="#262626" stroke-width="0.9" fill="none" /><path d="M1011.7,430.0L1011.7,447.0" stroke="#262626" stroke-width="0.6" /><path d="M1013.3,430.0L1013.3,447.0" stroke="#262626" stroke-width="0.6" /><rect x="1066.1" y="425.5" width="9.4" height="4.4" stroke="#262626" stroke-width="0.9" fill="none" /><rect x="1068.6" y="429.9" width="4.6" height="24.6" stroke="#262626" stroke-width="0.9" fill="none" /><path d="M1070.1,430.0L1070.1,447.0" stroke="#262626" stroke-width="0.6" /><path d="M1071.7,430.0L1071.7,447.0" stroke="#262626" stroke-width="0.6" /><path d="M1001.8,520.3H1012a4.1,4.1 0 0 0 4.1,-4.1V452.5a4.7,4.7 0 0 1 4.7,-4.7H1061.7a4.7,4.7 0 0 1 4.7,4.7V516.2a4.1,4.1 0 0 0 4.1,4.1H1080.7" stroke="#262626" stroke-width="1" fill="none"/><path d="M1001.8,523.5H1014a6.3,6.3 0 0 0 6.3,-6.3V454a3,3 0 0 1 3,-3H1059.2a3,3 0 0 1 3,3V517.2a6.3,6.3 0 0 0 6.3,6.3H1080.7" stroke="#262626" stroke-width="1" fill="none"/><path d="M1033.7,451.0L1033.7,468.5" stroke="#262626" stroke-width="1.05" /><path d="M1049.7,451.0L1049.7,468.5" stroke="#262626" stroke-width="1.05" /><rect x="1037.9" y="452.0" width="7.6" height="2.2" stroke="#262626" stroke-width="0.8" fill="none" /><rect x="1040.3" y="445.0" width="3.0" height="6.0" stroke="#262626" stroke-width="0.7" fill="none" /><rect x="1023.1" y="468.5" width="37.0" height="41.4" stroke="#262626" stroke-width="1.1" fill="none" /><path d="M1023.1,483.6H1034.5V488.6H1042.9V483.6H1060.1" stroke="#262626" stroke-width="1.2" fill="none"/><path d="M1023.1,494.8L1060.1,494.8" stroke="#262626" stroke-width="1.2" /><circle cx="1028.7" cy="476.4" r="2" stroke="#262626" stroke-width=".9" fill="none"/><ellipse cx="1025.3" cy="502" rx="1.6" ry="2.3" stroke="#262626" stroke-width=".9" fill="none"/><circle cx="1053.9" cy="502" r="4.8" stroke="#262626" stroke-width="1" fill="none"/><path d="M1053.9,497.2a4.8,4.8 0 0 0 0,9.6a1.2,4.8 0 0 1 0,-9.6z" fill="#111"/><ellipse cx="1039.1" cy="502" rx="1.3" ry="3.2" fill="#111"/><path d="M1037.0,494.8L1037.0,509.9" stroke="#262626" stroke-width="1.05" /><path d="M1046.0,494.8L1046.0,509.9" stroke="#262626" stroke-width="1.05" /><path d="M1058.5,488.0L1058.5,494.8" stroke="#111" stroke-width="1.4" /><path d="M1037.9,509.9L1037.9,524.2" stroke="#262626" stroke-width="1.05" /><path d="M1044.6,509.9L1044.6,524.2" stroke="#262626" stroke-width="1.05" /><rect x="998.5" y="517.5" width="6.7" height="6.7" stroke="#262626" stroke-width="0.9" fill="none" /><rect x="1078.2" y="517.5" width="6.7" height="6.7" stroke="#262626" stroke-width="0.9" fill="none" /><rect x="995.6" y="524.3" width="91.1" height="146.3" stroke="#262626" stroke-width="1.1" fill="none" rx="3"/><rect x="997.5" y="535.6" width="88.0" height="123.4" stroke="#262626" stroke-width="0.9" fill="none" rx="4"/><path d="M1029.0,524.3L1055.0,524.3" stroke="#111" stroke-width="1.6" /><circle cx="1008" cy="530.3" r="3.3" stroke="#262626" stroke-width=".9" fill="none"/><circle cx="1008" cy="530.3" r="1.9" stroke="#262626" stroke-width=".8" fill="none"/><circle cx="1008" cy="664.6" r="3.3" stroke="#262626" stroke-width=".9" fill="none"/><circle cx="1008" cy="664.6" r="1.9" stroke="#262626" stroke-width=".8" fill="none"/><circle cx="1076" cy="530.3" r="3.3" stroke="#262626" stroke-width=".9" fill="none"/><circle cx="1076" cy="530.3" r="1.9" stroke="#262626" stroke-width=".8" fill="none"/><circle cx="1076" cy="664.6" r="3.3" stroke="#262626" stroke-width=".9" fill="none"/><circle cx="1076" cy="664.6" r="1.9" stroke="#262626" stroke-width=".8" fill="none"/><circle cx="1017.2" cy="530.8" r="1.7" stroke="#262626" stroke-width=".7" fill="none"/><circle cx="1017.2" cy="664.2" r="1.7" stroke="#262626" stroke-width=".7" fill="none"/><circle cx="1066.4" cy="530.8" r="1.7" stroke="#262626" stroke-width=".7" fill="none"/><circle cx="1066.4" cy="664.2" r="1.7" stroke="#262626" stroke-width=".7" fill="none"/><circle cx="1041.9" cy="597.2" r="31" stroke="#262626" stroke-width="1.1" fill="none"/><circle cx="1041.9" cy="597.2" r="29.2" stroke="#262626" stroke-width=".7" fill="none"/><clipPath id="cg"><circle cx="1041.9" cy="597.2" r="29"/></clipPath><g clip-path="url(#cg)"><path d="M1011.9,570.7L1071.9,570.7" stroke="#262626" stroke-width="0.8" /><path d="M1011.9,574.7L1071.9,574.7" stroke="#262626" stroke-width="0.8" /><path d="M1011.9,578.6L1071.9,578.6" stroke="#262626" stroke-width="0.8" /><path d="M1011.9,582.6L1071.9,582.6" stroke="#262626" stroke-width="0.8" /><path d="M1011.9,586.5L1071.9,586.5" stroke="#262626" stroke-width="0.8" /><path d="M1011.9,590.5L1071.9,590.5" stroke="#262626" stroke-width="0.8" /><path d="M1011.9,594.4L1071.9,594.4" stroke="#262626" stroke-width="0.8" /><path d="M1011.9,598.4L1071.9,598.4" stroke="#262626" stroke-width="0.8" /><path d="M1011.9,602.3L1071.9,602.3" stroke="#262626" stroke-width="0.8" /><path d="M1011.9,606.3L1071.9,606.3" stroke="#262626" stroke-width="0.8" /><path d="M1011.9,610.2L1071.9,610.2" stroke="#262626" stroke-width="0.8" /><path d="M1011.9,614.2L1071.9,614.2" stroke="#262626" stroke-width="0.8" /><path d="M1011.9,618.1L1071.9,618.1" stroke="#262626" stroke-width="0.8" /><path d="M1011.9,622.1L1071.9,622.1" stroke="#262626" stroke-width="0.8" /><path d="M1029.0,575.5L1029.0,579.5" stroke="#262626" stroke-width="0.7" /><path d="M1029.0,583.5L1029.0,587.5" stroke="#262626" stroke-width="0.7" /><path d="M1050.0,583.5L1050.0,587.5" stroke="#262626" stroke-width="0.7" /><path d="M1029.0,591.3L1029.0,595.2" stroke="#262626" stroke-width="0.7" /><path d="M1029.0,599.2L1029.0,603.2" stroke="#262626" stroke-width="0.7" /><path d="M1029.0,615.0L1029.0,619.0" stroke="#262626" stroke-width="0.7" /><path d="M1037.0,623.0L1037.0,627.0" stroke="#262626" stroke-width="0.7" /><path d="M1058.0,607.0L1058.0,611.0" stroke="#262626" stroke-width="0.7" /><rect x="1023.0" y="607.5" width="36.0" height="3.6" stroke="#262626" stroke-width="0.8" fill="#fafafa" /></g><rect x="1029.9" y="670.6" width="23.2" height="2.9" stroke="#262626" stroke-width="0.9" fill="none" /><rect x="1034.0" y="673.5" width="15.5" height="4.8" stroke="#262626" stroke-width="0.9" fill="none" /><rect x="1031.6" y="678.3" width="20.4" height="9.6" stroke="#262626" stroke-width="1" fill="none" /><rect x="1037.0" y="687.9" width="10.1" height="9.6" stroke="#262626" stroke-width="1" fill="none" /><path d="M1036.5,678.3L1036.5,687.9" stroke="#262626" stroke-width="0.8" /><path d="M1047.3,678.3L1047.3,687.9" stroke="#262626" stroke-width="0.8" />
</svg>
<svg class="i" style="left:0;top:0;pointer-events:none" width="1599" height="834" viewBox="0 0 1599 834">
<g transform="translate(16,10) scale(.9)" ><path d="M-4.5,-6h5.5l3.5,3.5v8.5h-9z"/><path d="M1,-6v3.5h3.5"/><path d="M2,6l2,-5l2,2l-2,5z" fill="#e8a33d" stroke="#e8a33d" stroke-width=".6"/></g>
<g transform="translate(34,10) scale(.9)" ><path d="M-6,-5h4l1.5,2h5v2.5h-8.5l-2,4.5z"/><path d="M-6,-5v9"/><path d="M4,1v5.5m-2.5,-2.5l2.5,2.5l2.5,-2.5" stroke="#4caf50" stroke-width="1.4"/></g>
<g transform="translate(54,10) scale(.9)" ><rect x="-6" y="-6.5" width="12" height="13" rx="1" stroke="#3d8bf0" stroke-width="1.3"/><rect x="-3.5" y="-6" width="7" height="4"/><rect x="-3.5" y="1.5" width="7" height="4.5"/></g>
<g transform="translate(73,10) scale(.9)" ><rect x="-6" y="-6.5" width="12" height="13" rx="1" stroke="#3d8bf0" stroke-width="1.3"/><rect x="-3.5" y="-6" width="7" height="4"/><path d="M-3.5,6v-4.5h5"/><path d="M1,6l1,-3l5,-5l2,2l-5,5z" fill="#e8a33d" stroke="#e8a33d" stroke-width=".5"/></g>
<g transform="translate(99,10) scale(.9)" ><path d="M0,6h-5v-12.5h5.5l3.5,3.5v4"/><path d="M.5,-6.5v3.5h3.5"/><circle cx="2.5" cy="3" r="2.2"/><path d="M4.2,4.8l2.3,2.2"/></g>
<g transform="translate(118,10) scale(.9)" ><path d="M-3.5,-2.5v-4h7v4"/><rect x="-6.5" y="-2.5" width="13" height="6.5" rx="1"/><rect x="-3.5" y="2" width="7" height="4.5" fill="#3d8bf0" stroke="#c9cbd0"/><path d="M3,6l1.5,-4l2.5,2.5l-1.5,4z" fill="#e8a33d" stroke="#e8a33d" stroke-width=".5"/></g>
<g transform="translate(137,10) scale(.9)" ><path d="M-3.5,-2.5v-4h7v4"/><rect x="-6.5" y="-2.5" width="13" height="6.5" rx="1"/><rect x="-3.5" y="2" width="7" height="4.5" fill="#3d8bf0" stroke="#c9cbd0"/><path d="M2.5,4.5h5m-2,-2.2l2.2,2.2l-2.2,2.2" stroke="#4caf50" stroke-width="1.4"/></g>
<g transform="translate(164,10.3)" stroke-width="1.3"><path d="M-2,-5l-3.5,3.5l3.5,3.5"/><path d="M-5.5,-1.5h7a3.4,3.4 0 0 1 0,6.8h-2" /></g>
<g transform="translate(183,10.3)" stroke-width="1.3"><path d="M2,-5l3.5,3.5l-3.5,3.5"/><path d="M5.5,-1.5h-7a3.4,3.4 0 0 0 0,6.8h2" /></g>
<g transform="translate(208,10) scale(.9)" ><path d="M-2,3.5c-3.5,-3 -2.5,-8.5 2,-8.5s5.5,5.5 2,8.5v1.5h-4z" fill="#e8a33d" fill-opacity=".35" stroke="#e8a33d" stroke-width="1.3"/><path d="M-1.5,6.8h3M-1,-0.5l1,1.5l1,-1.5M0,1v3" stroke="#e8a33d" stroke-width=".9"/></g>
<g transform="translate(222,10.5) scale(.9)" ><circle r="2.6"/><path d="M0,-6v1.6M0,6v-1.6M-6,0h1.6M6,0h-1.6M-4.2,-4.2l1.1,1.1M4.2,4.2l-1.1,-1.1M-4.2,4.2l1.1,-1.1M4.2,-4.2l-1.1,1.1"/></g>
<g transform="translate(237,10.5) scale(.9)" stroke="#595c62"><rect x="-3" y="-1" width="8.5" height="6"/><path d="M-5.5,-1v-2a2.5,2.5 0 0 1 5,0v2"/><path d="M1.2,1.5v1.5"/></g>
<g transform="translate(251,10.5) scale(.9)" ><path d="M-3,-2.5v-3.5h6v3.5"/><rect x="-5.5" y="-2.5" width="11" height="5.5" rx="1" fill="#c9cbd0"/><rect x="-3" y="2" width="6" height="4" fill="#2a2c30"/></g>
<g transform="translate(264.5,10.2)" ><rect x="-4.3" y="-4.7" width="8.6" height="9.4" rx=".8" fill="#e9e9e9" stroke="#141517" stroke-width=".8"/></g>
<g transform="translate(431,10.5)" stroke="#a9acb2"><path d="M-3,-1.5l3,3l3,-3"/></g>
<g transform="translate(852,10.5)" stroke="#a9acb2"><path d="M-3,-1.5l3,3l3,-3"/></g>
<g transform="translate(447,10) scale(.9)" ><path d="M-6.5,2l6,-5.5l5,4.5l-5.5,5.5z" fill="#e8a33d" fill-opacity=".25" stroke="#e8a33d" stroke-width="1.3"/><path d="M-5,3.5l5,3" stroke="#e8a33d"/><path d="M1,-4.5l4,-2.3l2,2l-2.5,3.8" stroke="#e6e7ea" stroke-width="1.2"/></g>
<g transform="translate(467,10) scale(.9)" ><path d="M-5.5,5.5l1,-3l6,-6l2,2l-6,6z" stroke="#3d8bf0"/><path d="M1,-5l4,4m-1.5,-5.5l3,3" stroke="#e6e7ea" stroke-width="1.6"/><path d="M2.5,6h4m-2,-2v4" stroke="#4caf50" stroke-width="1.3"/></g>
<g transform="translate(486,10) scale(.9)" ><rect x="-6.5" y="-6" width="4" height="4"/><rect x="-0.5" y="-6" width="4" height="4"/><rect x="-6.5" y="0" width="4" height="4"/><path d="M0,-1l1.2,7.5l1.8,-2l2,3l1.2,-.8l-2,-3l2.6,-.4z" fill="#e6e7ea" stroke="#e6e7ea" stroke-width=".5"/></g>
<g transform="translate(505,10) scale(.9)" ><rect x="-6.5" y="-6" width="3.6" height="3.6"/><rect x="-6.5" y="1" width="3.6" height="3.6" stroke="#3d8bf0"/><rect x="-1" y="-6" width="3.6" height="3.6" stroke="#3d8bf0"/><path d="M2,2.5c-2.5,-2 -1.8,-5.5 1.3,-5.5s3.8,3.5 1.3,5.5v1.5h-2.6z" fill="#9a9da3" stroke="#9a9da3" stroke-width=".6"/></g>
<g transform="translate(524,10) scale(.9)" ><rect x="-6.5" y="-6" width="4" height="4" stroke="#3d8bf0"/><rect x="-0.5" y="-6" width="4" height="4" stroke="#3d8bf0"/><rect x="-6.5" y="0" width="4" height="4"/><path d="M0,-1l1.2,7.5l1.8,-2l2,3l1.2,-.8l-2,-3l2.6,-.4z" fill="#e6e7ea" stroke="#e6e7ea" stroke-width=".5"/></g>
<g transform="translate(544,10) scale(.9)" ><rect x="-6.5" y="-6" width="3.6" height="3.6" stroke="#3d8bf0"/><rect x="-6.5" y="1" width="3.6" height="3.6" stroke="#3d8bf0"/><rect x="-1" y="-6" width="3.6" height="3.6" stroke="#3d8bf0"/><path d="M2,2.5c-2.5,-2 -1.8,-5.5 1.3,-5.5s3.8,3.5 1.3,5.5v1.5h-2.6z" fill="#e8a33d" stroke="#e8a33d" stroke-width=".6"/></g>
<g transform="translate(570,10) scale(.9)" ><path d="M0,-6.5l6,3v7l-6,3l-6,-3v-7z"/><path d="M-6,-3.5l6,3l6,-3M0,-0.5v7"/></g>
<g transform="translate(589,10) scale(.9)" ><path d="M0,-6.5l6,3v7l-6,3l-6,-3v-7z"/><path d="M-6,-3.5l6,3l6,-3M0,-0.5v7"/><path d="M0,-0.5l6,-3v7l-6,3z" stroke="#3d8bf0"/></g>
<g transform="translate(608,10) scale(.9)" ><rect x="-6" y="-3" width="9" height="9"/><circle cx="1.5" cy="-1.5" r="4.6" stroke="#3d8bf0"/><circle cx="1.5" cy="-1.5" r="2.2" fill="#3d8bf0" stroke="none" opacity=".6"/></g>
<g transform="translate(627,10) scale(.9)" ><path d="M0,-6.5l6.5,3l-6.5,3l-6.5,-3z" fill="#3d8bf0" stroke="#3d8bf0"/><path d="M-6.5,-0.5l6.5,3l6.5,-3M-6.5,2.5l6.5,3l6.5,-3"/><path d="M-6.5,-3.5v6M6.5,-3.5v6M0,-.5v6" stroke="#3d8bf0"/></g>
<g transform="translate(653,10) scale(.9)" ><rect x="-6" y="-6" width="12" height="12" stroke="#3d8bf0" stroke-width="1.2"/><rect x="-6" y="-6" width="12" height="3" fill="#3d8bf0" stroke="none"/><path d="M-1.5,-2v7M2,-1h2.5M2,1.5h2.5M2,4h2.5"/></g>
<g transform="translate(672,10) scale(.9)" ><path d="M-6,5l7,-10.5l2,1.5l-5.5,9z"/><path d="M-1,5.5h7v-8z" fill="#3d8bf0" stroke="#c9cbd0"/></g>
<g transform="translate(691,10) scale(.9)" ><circle r="2.4"/><path d="M-1.2,-6.5h2.4l.5,1.8l1.7,.7l1.6,-.9l1.7,1.7l-.9,1.6l.7,1.7l1.8,.5v2.4l-1.8,.5l-.7,1.7l.9,1.6l-1.7,1.7l-1.6,-.9l-1.7,.7l-.5,1.8h-2.4l-.5,-1.8l-1.7,-.7l-1.6,.9l-1.7,-1.7l.9,-1.6l-.7,-1.7l-1.8,-.5v-2.4l1.8,-.5l.7,-1.7l-.9,-1.6l1.7,-1.7l1.6,.9l1.7,-.7z" transform="scale(.82)"/></g>
<g transform="translate(711,10.3) scale(.9)" ><path d="M-6,-3h2.5M1,-3h5M-6,3h6M4.5,3h1.5"/><circle cx="-1.2" cy="-3" r="2"/><circle cx="2.3" cy="3" r="2"/></g>
<g transform="translate(729.5,10.3) scale(.9)" ><rect x="-6.5" y="-5" width="13" height="10" /><path d="M-4,-.5v-2.5h2.8M4,.5v2.5h-2.8M-4,-3l3,2.5M4,3l-3,-2.5"/></g>
<g transform="translate(19,31.6)" ><path d="M-1.3,-4c1.6,0 2.1,1.2 2.6,2.8l.8,2.6c.3,.9 .8,1.3 1.5,1.1M1,-1.7l-3.9,4.9" stroke="#fff" stroke-width="1.6" /><circle cx="3.3" cy="2.3" r="1" fill="#fff" stroke="none"/></g>
<g transform="translate(32.3,31)" stroke="#9a9da3" stroke-width="1.2"><path d="M-2.5,-1.2l2.5,2.5l2.5,-2.5"/></g>
<g transform="translate(1414,32)" stroke="#b4b7bc"><circle cx="1" cy="-1" r="3.3"/><path d="M-1.4,1.4l-3,3"/></g>
<g transform="translate(1584,31)" stroke="#e6e7ea"><rect x="-6.5" y="-6" width="12" height="11" rx="1"/><path d="M-6.5,-2.5h12M-3,-2.5v8" /><circle cx="4" cy="4" r="2.6" fill="#e6e7ea"/></g>
<g transform="translate(147,110)" stroke="#8d9097"><path d="M-2.5,-1.2l2.5,2.5l2.5,-2.5"/></g>
<g transform="translate(339,110)" stroke="#8d9097"><path d="M-2.5,-1.2l2.5,2.5l2.5,-2.5"/></g>
<g transform="translate(477,110)" stroke="#8d9097"><path d="M-2.5,-1.2l2.5,2.5l2.5,-2.5"/></g>
<g transform="translate(665,110)" stroke="#8d9097"><path d="M-2.5,-1.2l2.5,2.5l2.5,-2.5"/></g>
<g transform="translate(849,110)" stroke="#8d9097"><path d="M-2.5,-1.2l2.5,2.5l2.5,-2.5"/></g>
<g transform="translate(973,110)" stroke="#8d9097"><path d="M-2.5,-1.2l2.5,2.5l2.5,-2.5"/></g>
<g transform="translate(66,99.5)" ><path d="M-2.3,-1l2.3,2.3l2.3,-2.3z" fill="#e1e3e6" stroke="none"/></g>
<g transform="translate(148,99.5)" ><path d="M-2.3,-1l2.3,2.3l2.3,-2.3z" fill="#e1e3e6" stroke="none"/></g>
<g transform="translate(409,99.5)" ><path d="M-2.3,-1l2.3,2.3l2.3,-2.3z" fill="#e1e3e6" stroke="none"/></g>
<g transform="translate(446,99.5)" ><path d="M-2.3,-1l2.3,2.3l2.3,-2.3z" fill="#e1e3e6" stroke="none"/></g>
<g transform="translate(486,99.5)" ><path d="M-2.3,-1l2.3,2.3l2.3,-2.3z" fill="#e1e3e6" stroke="none"/></g>
<g transform="translate(523,99.5)" ><path d="M-2.3,-1l2.3,2.3l2.3,-2.3z" fill="#e1e3e6" stroke="none"/></g>
<g transform="translate(1008,99.5)" ><path d="M-2.3,-1l2.3,2.3l2.3,-2.3z" fill="#e1e3e6" stroke="none"/></g>
<g transform="translate(224,65.5)" ><path d="M-2.3,-1l2.3,2.3l2.3,-2.3z" fill="#e1e3e6" stroke="none"/></g>
<g transform="translate(250,65.5)" ><path d="M-2.3,-1l2.3,2.3l2.3,-2.3z" fill="#e1e3e6" stroke="none"/></g>
<g transform="translate(220,84.5)" ><path d="M-2.3,-1l2.3,2.3l2.3,-2.3z" fill="#e1e3e6" stroke="none"/></g>
<g transform="translate(250,84.5)" ><path d="M-2.3,-1l2.3,2.3l2.3,-2.3z" fill="#e1e3e6" stroke="none"/></g>
<g transform="translate(649,65.5)" ><path d="M-2.3,-1l2.3,2.3l2.3,-2.3z" fill="#e1e3e6" stroke="none"/></g>
<g transform="translate(646,84.5)" ><path d="M-2.3,-1l2.3,2.3l2.3,-2.3z" fill="#e1e3e6" stroke="none"/></g>
<g transform="translate(721,65.5)" ><path d="M-2.3,-1l2.3,2.3l2.3,-2.3z" fill="#e1e3e6" stroke="none"/></g>
<g transform="translate(718,84.5)" ><path d="M-2.3,-1l2.3,2.3l2.3,-2.3z" fill="#e1e3e6" stroke="none"/></g>
<g transform="translate(29,61)" stroke-width="1.35"><path d="M-10.5,10.5l21,-21"/><rect x="-11.8" y="9.2" width="2.6" height="2.6" stroke="#3d8bf0" stroke-width=".9" fill="#2c2e33"/><rect x="9.7" y="-12.3" width="2.6" height="2.6" stroke="#3d8bf0" stroke-width=".9" fill="#2c2e33"/></g>
<g transform="translate(66,61)" stroke-width="1.35"><path d="M-10,10v-11.5c1,-12 18,-12 20,0"/><rect x="-11.3" y="8.7" width="2.6" height="2.6" stroke="#3d8bf0" stroke-width=".9" fill="#2c2e33"/><rect x="-11.3" y="-3.3" width="2.6" height="2.6" stroke="#3d8bf0" stroke-width=".9" fill="#2c2e33"/><rect x="8.7" y="-3.3" width="2.6" height="2.6" stroke="#3d8bf0" stroke-width=".9" fill="#2c2e33"/></g>
<g transform="translate(108,61)" stroke-width="1.35"><rect x="-8.5" y="-7.5" width="17" height="15"/><rect x="-9.8" y="6.2" width="2.6" height="2.6" stroke="#3d8bf0" stroke-width=".9" fill="#2c2e33"/><rect x="7.2" y="-8.3" width="2.6" height="2.6" stroke="#3d8bf0" stroke-width=".9" fill="#2c2e33"/></g>
<g transform="translate(148,61)" stroke-width="1.35"><circle r="11.5"/><path d="M0,0h11.5" /><rect x="-1.3" y="-1.3" width="2.6" height="2.6" stroke="#3d8bf0" stroke-width=".9" fill="#2c2e33"/><rect x="10.2" y="-1.3" width="2.6" height="2.6" stroke="#3d8bf0" stroke-width=".9" fill="#2c2e33"/></g>
<g transform="translate(174,65)" ><rect x="-5.5" y="-3" width="8.5" height="8.5"/><circle cx="1.5" cy="-1.5" r="4.6" stroke="#3d8bf0" fill="#3d8bf0" fill-opacity=".45"/></g>
<g transform="translate(174,84.5)" ><ellipse rx="6.5" ry="3.6" transform="rotate(-45)"/><path d="M-5.5,5.5l11,-11"/><rect x="-6.8" y="4.2" width="2.6" height="2.6" stroke="#3d8bf0" stroke-width=".9" fill="#2c2e33"/><circle cx="5.5" cy="-5.5" r="1.1" fill="#3d8bf0" stroke="#3d8bf0"/></g>
<g transform="translate(238,65)" ><path d="M-3,5.5a6,6 0 1 1 7,-3.5"/><circle cx="-2.5" cy="5.5" r="1.2"/><rect x="3" y="0.5" width="2.2" height="2.2"/></g>
<g transform="translate(238,84.5)" ><circle r="3.2"/></g>
<g transform="translate(283,61)" stroke-width="1.25"><path d="M-0.4,-12.7l11.2,5.8v13.6l-11.2,5.8l-10.7,-5.8v-13.6z"/><path d="M-11.1,-6.9l10.7,6l11.2,-6M-0.4,-0.9v13.4"/></g>
<g transform="translate(320,61)" stroke-width="1.2"><path d="M-10.7,6.7v-13.6l10.8,-5.8l11.4,5.8v13.6"/><path d="M-10.7,-6.9l5.3,2.9M11.5,-6.9l-6,2.9"/><path d="M-10.7,6.7l10.8,5.8l11.4,-5.8M-9.7,6.2l5.8,-2.9M10.5,6.2l-6.5,-2.9" stroke="#3d8bf0" stroke-width="1.2"/><path d="M0.1,4.6v-10" stroke="#3d8bf0" stroke-width="1.5"/><path d="M-2.5,-3.3l2.6,-4.3l2.6,4.3z" fill="#3d8bf0" stroke="#3d8bf0" stroke-width=".6"/></g>
<g transform="translate(361,61)" ><path d="M-7.5,-5.5h20.1l-4.3,10.1h-20.1z" stroke="#3d8bf0" stroke-width="1.3"/><path d="M1.5,-10v7.5M1.5,1v9" stroke="#e6e7ea" stroke-width="1.4"/><path d="M-1.2,-9l2.7,-4l2.7,4zM-1.2,9l2.7,4l2.7,-4z" fill="#e6e7ea" stroke="#e6e7ea" stroke-width=".5"/></g>
<g transform="translate(409,61)" ><path d="M-13.1,-5.2v15.1l15.1,2l9.9,-7.9v-7.9M-13.1,-5.2l11.2,-7.2l5.9,.7M2,4v7.9M-13.1,-5.2l7.2,-.6" stroke-width="1.2"/><path d="M-5.9,-5.8l7.9,-5.3c5,.6 9,4.1 9.9,7.9l-9.2,6.6c-.7,-4.4 -3.7,-7.9 -8.6,-9.2z" stroke="#3d8bf0" stroke-width="1.4"/></g>
<g transform="translate(446,61)" ><path d="M-12,-5.2v9.9l15.8,7.2l9.2,-5.3v-8.5M-12,-5.2l8.5,-7.2l7.9,2M-12,-5.2l7.9,.7M3.8,4v7.9" stroke-width="1.2"/><path d="M-4.1,-4.5l8.5,-5.9l8.6,8.5l-9.2,5.9z" stroke="#3d8bf0" stroke-width="1.4"/></g>
<g transform="translate(486,61)" ><path d="M-13.9,-12.4h10.5v16.4h15.1v7.9h-25.6zM-3.4,4l-10.5,7.9" stroke-width="1.25"/></g>
<g transform="translate(523,61)" ><path d="M-13.5,-3.9l7.2,-3.9l4.8,2M-13.5,-3.9l.7,7.9l5.8,5.5l3,-1.5M-13.5,-3.9l6,3.9l2.5,-1.4" stroke-width="1.15"/><path d="M-9.3,8.6l8,-12" stroke="#c9cbd0" stroke-width="1.2"/><path d="M-2.8,-1.8l6.3,-9.4a2.6,2.6 0 0 1 4.5,2.6l-4.2,7" stroke="#d9a04a" stroke-width="1.3"/><path d="M5.6,-2.6l7.2,3.4v7.6l-7.2,4.2l-7.2,-4.2v-7.6zM-1.6,0.8l7.2,3.6l7.2,-3.6M5.6,4.4v8.2" stroke="#3d8bf0" stroke-width="1.3" fill="#2c2e33"/></g>
<g transform="translate(574,61)" ><path d="M-8,-8.5v17.8h17.1M-2.1,-7.1a10.5,10.5 0 0 1 10.5,9.8" stroke="#dba520" stroke-width="1.5"/><path d="M-12,-8.5l4,-4l4,4zM9.1,6l3.9,3.3l-3.9,3.2z" fill="#3f95ff" stroke="#3f95ff" stroke-width=".6"/><circle cx="-8" cy="9.3" r="3.1" fill="#3f95ff" stroke="none"/></g>
<g transform="translate(607,65)" ><path d="M0,-6.5v13M-6.5,0h13" stroke="#3d8bf0"/><path d="M0,-6.5l6.5,6.5l-6.5,6.5l-6.5,-6.5z" stroke="#3d8bf0"/></g>
<g transform="translate(607,84)" ><rect x="-6" y="-6" width="4.5" height="4.5"/><path d="M1,-4h3.5v3.5" /><rect x="0" y="2" width="5" height="5" stroke="#3d8bf0" rx="1"/></g>
<g transform="translate(662,65)" ><path d="M0,-7v14" stroke="#3d8bf0" stroke-width="1.3"/><path d="M-1,-5a6,5 0 1 0 6,5" stroke="#3d8bf0"/><path d="M3,0l2,-2l2,2.5" stroke="#3d8bf0"/></g>
<g transform="translate(662,84)" ><path d="M-6,6.5l4.5,-13v13z"/><path d="M6,6.5l-4.5,-13v13z" stroke="#3d8bf0"/><path d="M0,-8l0,16" stroke="#3d8bf0" transform="rotate(-12)"/></g>
<g transform="translate(736,65)" ><rect x="-6" y="-5" width="12" height="10" stroke="#3d8bf0" stroke-width="1.2"/><path d="M-6,1.5h5v3.5M1,-1l3.5,-2.5m-2.2,0h2.2v2" stroke="#e6e7ea"/></g>
<g transform="translate(736,84)" ><path d="M-5,-4l3,-2l3,1.5l-1,3l-3.5,.5z"/><path d="M-1,2l4,-2l4,2v4l-4,2l-4,-2zM-1,2l4,2l4,-2M3,4v4" stroke="#3d8bf0"/><circle cx="4.5" cy="-3.5" r="1.7" fill="#e8a33d" stroke="#e8a33d"/></g>
<g transform="translate(780,60.5)" ><g transform="scale(1.1)"><path d="M-11,-4.5l9,-4l10,4v10.5l-10,5l-9,-4.5z"/><path d="M-11,-4.5l9,4.5l10,-4.5M-2,0v11.5"/><ellipse cx="-1.5" cy="-9" rx="4" ry="1.8"/><path d="M-5.5,-9v3.5M2.5,-9v3.5"/></g><path d="M8.3,4.5v9M3.8,9h9" stroke="#6cc22e" stroke-width="1.5"/></g>
<g transform="translate(827,60.5)" ><path d="M-9,-12h10l6,6v18h-16z"/><path d="M1,-12v6h6" /><path d="M-6,0l4.5,-2l4.5,2v5l-4.5,2.5l-4.5,-2.5zM-6,0l4.5,2l4.5,-2M-1.5,2v5.5"/><path d="M7,3v10M2,8h10M3.5,4.5l7,7M10.5,4.5l-7,7" stroke="#e8a33d" stroke-width="1.2"/></g>
<g transform="translate(874,60.5)" ><rect x="-4" y="-12" width="14" height="13"/><path d="M-4,-5a8.5,8.5 0 1 0 8,9.5"/><path d="M2,-7l5,4" /><path d="M4,12c0,-5 3,-7.5 8,-7.5m-3,-3l3.5,3l-3.5,3" stroke="#4caf50" stroke-width="1.4"/></g>
<g transform="translate(926,60.5)" ><path d="M-12,-11.5h15l9,8.5h-16z"/><path d="M-4,-3h16v5h-16z" fill="#0f1012"/><path d="M-12,-11.5l8,8.5v5h16v-5M-12,-11.5v4l8,9"/><path d="M7,2.5v10M2,7.5h10M3.5,4l7,7M10.5,4l-7,7" stroke="#f08a2c" stroke-width="1.2"/><circle cx="7" cy="7.5" r="1.5" fill="#ffd36b" stroke="none"/></g>
<g transform="translate(963,60.5)" ><path d="M-12.4,4.4h9M-12.4,12.3h9M4,4.4h4.4v7.9h-7" stroke-width="1.1"/><path d="M4.1,-11.5h8.7v6c0,11 -3.8,17.8 -13.8,17.8h-2.8v-7.9h2.8c4,0 5.1,-2.9 5.1,-8.9z" stroke="#3d8bf0" stroke-width="1.3"/><path d="M-1.6,-2.8v-8.7m-2.6,3l2.6,-3l2.6,3" stroke-width="1.2"/></g>
<g transform="translate(1007,61)" ><path d="M-12.7,-2l9.7,-4.5h14.8l-9.8,4.5zM-12.7,-2v6.5h14.7v-6.5M2,4.5l9.8,-4.5v-6.5" stroke-width="1.25"/><path d="M-6.2,-7.3l12.2,-4.7v16l-12.2,8.5z" stroke="#3d8bf0" fill="#3d8bf0" fill-opacity=".4" stroke-width="1.2"/><path d="M-2.5,-4.5h8l-4,2h-8z" stroke="#c9cbd0" stroke-width=".9"/></g>
<g transform="translate(1052,60.5)" ><path d="M-5,-7.5l4,-4h12v11l-4,4h-12zM-5,-7.5h12v11M7,-7.5l4,-4"/><path d="M-12,-9l3.5,-3.5v11l-3.5,3.5zM-4,8.5h12l3,-3M-4,8.5l-2,3.5h12l2,-3.5M-10,-11l5,0" stroke="#3d8bf0"/><path d="M-4,6h11" stroke="#3d8bf0"/></g>
<g transform="translate(1090,65)" ><rect x="-5.5" y="-3" width="8.5" height="8.5"/><circle cx="1.5" cy="-1.5" r="4.6" stroke="#3d8bf0" fill="#3d8bf0" fill-opacity=".3"/></g>
<g transform="translate(1113,65)" ><path d="M0,-6l5.5,2.8v6.4l-5.5,2.8l-5.5,-2.8v-6.4z"/><path d="M-5.5,-3.2l5.5,2.8l5.5,-2.8M0,-0.4v6.4"/><path d="M-5.5,-3.2l5.5,2.8v6.4l-5.5,-2.8z" stroke="#3d8bf0"/></g>
<g transform="translate(1136,65)" ><path d="M0,-6l5.5,2.8v6.4l-5.5,2.8l-5.5,-2.8v-6.4z"/><path d="M-5.5,-3.2l5.5,2.8l5.5,-2.8M0,-0.4v6.4"/></g>
<g transform="translate(1159,65)" ><path d="M0,-6l5.5,2.8v6.4l-5.5,2.8l-5.5,-2.8v-6.4z"/><path d="M-5.5,-3.2l5.5,2.8l5.5,-2.8M0,-0.4v6.4"/><circle cy="-.5" r="1.5" fill="#3d8bf0" stroke="#3d8bf0"/></g>
<g transform="translate(1090,84)" ><rect x="-6.5" y="-6" width="3.6" height="3.6" stroke="#3d8bf0"/><rect x="-6.5" y="1" width="3.6" height="3.6" stroke="#3d8bf0"/><rect x="-1" y="-6" width="3.6" height="3.6" stroke="#3d8bf0"/><path d="M2,2.5c-2.5,-2 -1.8,-5.5 1.3,-5.5s3.8,3.5 1.3,5.5v1.5h-2.6z" fill="#e8a33d" stroke="#e8a33d" stroke-width=".6"/></g>
<g transform="translate(1113,84)" ><rect x="-6.5" y="-6" width="3.6" height="3.6"/><rect x="-6.5" y="1" width="3.6" height="3.6" stroke="#3d8bf0"/><rect x="-1" y="-6" width="3.6" height="3.6"/><path d="M2,2.5c-2.5,-2 -1.8,-5.5 1.3,-5.5s3.8,3.5 1.3,5.5v1.5h-2.6z" fill="#c9cbd0" stroke="#c9cbd0" stroke-width=".6"/></g>
<g transform="translate(1136,84)" ><rect x="-6.5" y="-6" width="4" height="4" stroke="#3d8bf0"/><rect x="-0.5" y="-6" width="4" height="4"/><rect x="-6.5" y="0" width="4" height="4"/><path d="M0,-1l1.2,7.5l1.8,-2l2,3l1.2,-.8l-2,-3l2.6,-.4z" fill="#e6e7ea" stroke="#e6e7ea" stroke-width=".5"/></g>
<g transform="translate(1198,60.5)" ><path d="M-11,-8l4,-4h17v15l-4,4M-11,-8h17v15M6,-8l4,-4M-11,-8v15" /><path d="M-2.5,3v-8m-2.5,2.5l2.5,-2.5l2.5,2.5"/><path d="M-11,7l-2,4.5h17l2,-4.5z" stroke="#3d8bf0"/><circle cx="-12.5" cy="11.5" r="1" fill="#3d8bf0" stroke="#3d8bf0"/><path d="M3,10l8,-8l2,2l-8,8z" stroke="#e8a33d" fill="#e8a33d" fill-opacity=".4"/></g>
<g transform="translate(35.3,196.2)" stroke="#a9acb2" stroke-width=".9"><path d="M-3,-1.5l3,3l3,-3"/></g>
<g transform="translate(47.5,195.7)" stroke="#d0d2d6" stroke-width=".8"><path d="M0,-4.5l4,2v4.6l-4,2l-4,-2v-4.6z"/><path d="M-4,-2.5l4,2l4,-2M0,-0.5v4.6"/></g>
<g transform="translate(58.8,208.36999999999998)" stroke="#d0d2d6" stroke-width=".8"><circle cx="-1.8" cy="1.2" r="2.9"/><path d="M-0.8,-1.5v-3h5v4.5h-2.2"/><path d="M-1.8,-0.3v1.5h1.5"/></g>
<g transform="translate(58.8,220.83999999999997)" stroke="#d0d2d6" stroke-width=".8"><circle cx="-1.8" cy="1.2" r="2.9"/><path d="M-0.8,-1.5v-3h5v4.5h-2.2"/><path d="M-1.8,-0.3v1.5h1.5"/></g>
<g transform="translate(58.8,233.30999999999997)" stroke="#d0d2d6" stroke-width=".8"><circle cx="-1.8" cy="1.2" r="2.9"/><path d="M-0.8,-1.5v-3h5v4.5h-2.2"/><path d="M-1.8,-0.3v1.5h1.5"/></g>
<g transform="translate(58.8,245.77999999999997)" stroke="#d0d2d6" stroke-width=".8"><circle cx="-1.8" cy="1.2" r="2.9"/><path d="M-0.8,-1.5v-3h5v4.5h-2.2"/><path d="M-1.8,-0.3v1.5h1.5"/></g>
<g transform="translate(58.8,258.25)" stroke="#d0d2d6" stroke-width=".8"><circle cx="-1.8" cy="1.2" r="2.9"/><path d="M-0.8,-1.5v-3h5v4.5h-2.2"/><path d="M-1.8,-0.3v1.5h1.5"/></g>
<g transform="translate(58.8,270.71999999999997)" stroke="#d0d2d6" stroke-width=".8"><circle cx="-1.8" cy="1.2" r="2.9"/><path d="M-0.8,-1.5v-3h5v4.5h-2.2"/><path d="M-1.8,-0.3v1.5h1.5"/></g>
<g transform="translate(58.8,283.19)" stroke="#d0d2d6" stroke-width=".8"><circle cx="-1.8" cy="1.2" r="2.9"/><path d="M-0.8,-1.5v-3h5v4.5h-2.2"/><path d="M-1.8,-0.3v1.5h1.5"/></g>
<g transform="translate(58.8,295.65999999999997)" stroke="#d0d2d6" stroke-width=".8"><circle cx="-1.8" cy="1.2" r="2.9"/><path d="M-0.8,-1.5v-3h5v4.5h-2.2"/><path d="M-1.8,-0.3v1.5h1.5"/></g>
<g transform="translate(58.8,308.13)" stroke="#d0d2d6" stroke-width=".8"><circle cx="-1.8" cy="1.2" r="2.9"/><path d="M-0.8,-1.5v-3h5v4.5h-2.2"/><path d="M-1.8,-0.3v1.5h1.5"/></g>
<g transform="translate(58.8,320.59999999999997)" stroke="#d0d2d6" stroke-width=".8"><circle cx="-1.8" cy="1.2" r="2.9"/><path d="M-0.8,-1.5v-3h5v4.5h-2.2"/><path d="M-1.8,-0.3v1.5h1.5"/></g>
<g transform="translate(58.8,333.07)" stroke="#d0d2d6" stroke-width=".8"><circle cx="-1.8" cy="1.2" r="2.9"/><path d="M-0.8,-1.5v-3h5v4.5h-2.2"/><path d="M-1.8,-0.3v1.5h1.5"/></g>
<g transform="translate(58.8,345.54)" stroke="#d0d2d6" stroke-width=".8"><circle cx="-1.8" cy="1.2" r="2.9"/><path d="M-0.8,-1.5v-3h5v4.5h-2.2"/><path d="M-1.8,-0.3v1.5h1.5"/></g>
<g transform="translate(58.8,358.01)" stroke="#d0d2d6" stroke-width=".8"><circle cx="-1.8" cy="1.2" r="2.9"/><path d="M-0.8,-1.5v-3h5v4.5h-2.2"/><path d="M-1.8,-0.3v1.5h1.5"/></g>
<g transform="translate(58.8,370.47999999999996)" stroke="#d0d2d6" stroke-width=".8"><circle cx="-1.8" cy="1.2" r="2.9"/><path d="M-0.8,-1.5v-3h5v4.5h-2.2"/><path d="M-1.8,-0.3v1.5h1.5"/></g>
<g transform="translate(58.8,382.95)" stroke="#d0d2d6" stroke-width=".8"><circle cx="-1.8" cy="1.2" r="2.9"/><path d="M-0.8,-1.5v-3h5v4.5h-2.2"/><path d="M-1.8,-0.3v1.5h1.5"/></g>
<g transform="translate(58.8,395.42)" stroke="#d0d2d6" stroke-width=".8"><circle cx="-1.8" cy="1.2" r="2.9"/><path d="M-0.8,-1.5v-3h5v4.5h-2.2"/><path d="M-1.8,-0.3v1.5h1.5"/></g>
<g transform="translate(58.8,407.89)" stroke="#d0d2d6" stroke-width=".8"><circle cx="-1.8" cy="1.2" r="2.9"/><path d="M-0.8,-1.5v-3h5v4.5h-2.2"/><path d="M-1.8,-0.3v1.5h1.5"/></g>
<g transform="translate(58.8,420.35999999999996)" stroke="#d0d2d6" stroke-width=".8"><circle cx="-1.8" cy="1.2" r="2.9"/><path d="M-0.8,-1.5v-3h5v4.5h-2.2"/><path d="M-1.8,-0.3v1.5h1.5"/></g>
<g transform="translate(58.8,432.83)" stroke="#d0d2d6" stroke-width=".8"><circle cx="-1.8" cy="1.2" r="2.9"/><path d="M-0.8,-1.5v-3h5v4.5h-2.2"/><path d="M-1.8,-0.3v1.5h1.5"/></g>
<g transform="translate(58.8,445.3)" stroke="#d0d2d6" stroke-width=".8"><circle cx="-1.8" cy="1.2" r="2.9"/><path d="M-0.8,-1.5v-3h5v4.5h-2.2"/><path d="M-1.8,-0.3v1.5h1.5"/></g>
<g transform="translate(58.8,457.77)" stroke="#d0d2d6" stroke-width=".8"><circle cx="-1.8" cy="1.2" r="2.9"/><path d="M-0.8,-1.5v-3h5v4.5h-2.2"/><path d="M-1.8,-0.3v1.5h1.5"/></g>
<g transform="translate(58.8,470.24)" stroke="#d0d2d6" stroke-width=".8"><circle cx="-1.8" cy="1.2" r="2.9"/><path d="M-0.8,-1.5v-3h5v4.5h-2.2"/><path d="M-1.8,-0.3v1.5h1.5"/></g>
<g transform="translate(58.8,482.71)" stroke="#d0d2d6" stroke-width=".8"><circle cx="-1.8" cy="1.2" r="2.9"/><path d="M-0.8,-1.5v-3h5v4.5h-2.2"/><path d="M-1.8,-0.3v1.5h1.5"/></g>
<g transform="translate(58.8,495.18)" stroke="#d0d2d6" stroke-width=".8"><circle cx="-1.8" cy="1.2" r="2.9"/><path d="M-0.8,-1.5v-3h5v4.5h-2.2"/><path d="M-1.8,-0.3v1.5h1.5"/></g>
<g transform="translate(58.8,507.65)" stroke="#d0d2d6" stroke-width=".8"><circle cx="-1.8" cy="1.2" r="2.9"/><path d="M-0.8,-1.5v-3h5v4.5h-2.2"/><path d="M-1.8,-0.3v1.5h1.5"/></g>
<g transform="translate(58.8,520.1200000000001)" stroke="#d0d2d6" stroke-width=".8"><circle cx="-1.8" cy="1.2" r="2.9"/><path d="M-0.8,-1.5v-3h5v4.5h-2.2"/><path d="M-1.8,-0.3v1.5h1.5"/></g>
<g transform="translate(58.8,532.59)" stroke="#d0d2d6" stroke-width=".8"><circle cx="-1.8" cy="1.2" r="2.9"/><path d="M-0.8,-1.5v-3h5v4.5h-2.2"/><path d="M-1.8,-0.3v1.5h1.5"/></g>
<g transform="translate(58.8,545.0600000000001)" stroke="#d0d2d6" stroke-width=".8"><circle cx="-1.8" cy="1.2" r="2.9"/><path d="M-0.8,-1.5v-3h5v4.5h-2.2"/><path d="M-1.8,-0.3v1.5h1.5"/></g>
<g transform="translate(58.8,557.53)" stroke="#d0d2d6" stroke-width=".8"><circle cx="-1.8" cy="1.2" r="2.9"/><path d="M-0.8,-1.5v-3h5v4.5h-2.2"/><path d="M-1.8,-0.3v1.5h1.5"/></g>
<g transform="translate(58.8,570.0)" stroke="#d0d2d6" stroke-width=".8"><circle cx="-1.8" cy="1.2" r="2.9"/><path d="M-0.8,-1.5v-3h5v4.5h-2.2"/><path d="M-1.8,-0.3v1.5h1.5"/></g>
<g transform="translate(58.8,582.47)" stroke="#d0d2d6" stroke-width=".8"><circle cx="-1.8" cy="1.2" r="2.9"/><path d="M-0.8,-1.5v-3h5v4.5h-2.2"/><path d="M-1.8,-0.3v1.5h1.5"/></g>
<g transform="translate(58.8,594.94)" stroke="#d0d2d6" stroke-width=".8"><circle cx="-1.8" cy="1.2" r="2.9"/><path d="M-0.8,-1.5v-3h5v4.5h-2.2"/><path d="M-1.8,-0.3v1.5h1.5"/></g>
<g transform="translate(46.5,607.71)" stroke="#a9acb2" stroke-width=".9"><path d="M-1.5,-3l3,3l-3,3"/></g>
<g transform="translate(58.5,607.21)" stroke="#b4b7bc" stroke-width=".7"><path d="M-2.8,-3.8h5.6v2h-5.6zM-1.6,-1.8v6h3.2v-6M-1.6,.5h3.2M-1.6,2.5h3.2"/></g>
<g transform="translate(58.5,617.5)" stroke="#8f9299" stroke-width=".7"><path d="M-2.8,-3.8h5.6v2h-5.6z"/></g>
<g transform="translate(35.5,633)" stroke="#c9cbd0" stroke-width=".9"><path d="M-3,-1.5l3,3l3,-3"/></g>
<g transform="translate(186,705.5)" stroke="#6f737b" stroke-width=".8"><path d="M-2,-1l2,2l2,-2"/></g>
<g transform="translate(186,719.8)" stroke="#6f737b" stroke-width=".8"><path d="M-2,-1l2,2l2,-2"/></g>
<g transform="translate(186,734.0999999999999)" stroke="#6f737b" stroke-width=".8"><path d="M-2,-1l2,2l2,-2"/></g>
<g transform="translate(186,748.4)" stroke="#6f737b" stroke-width=".8"><path d="M-2,-1l2,2l2,-2"/></g>
<g transform="translate(181.5,762.6999999999999)" stroke="#c9cbd0" stroke-width=".8"><path d="M-1,-4h2v3.5h2v2.5h-6v-2.5h2zM-3,2v2.5h6v-2.5"/></g>
<g transform="translate(35,777.0)" stroke="#a9acb2" stroke-width=".9"><path d="M-1.5,-3l3,3l-3,3"/></g>
<g transform="translate(156.5,148.2)" stroke="#b4b7bc" stroke-width=".9"><circle cx="1" cy="-1" r="2.8"/><path d="M-1,1l-3,3"/></g>
<g transform="translate(43.5,168.5)" stroke="#9da0a6" stroke-width=".8"><path d="M-4.5,-4.5h3.5v9h-3.5zM-1,-2h3M-1,1.5h3M2,-3.5h3v3h-3zM2,0h3v4.5h-3z"/></g>
<g transform="translate(59.5,168.5)" stroke-width=".9"><circle cx="-3.5" cy="-4" r="1.3" stroke="#c9cbd0"/><path d="M-3.5,-2.7v5.2h2.5" stroke="#c9cbd0"/><rect x="-1" y="0" width="5.5" height="4" rx=".8" stroke="#c0262d"/></g>
<g transform="translate(156.5,168.5)" stroke="#d9dbdf" stroke-width=".8"><path d="M-2.5,-4.5v2M-2.5,-.8v1.8M-2.5,2.8v2M-1,-1.5l1.5,-3l1.5,3M-.5,-2.5h2M-1,2h3l-3,3h3" /></g>
<g transform="translate(172.8,168.5)" stroke-width=".9"><rect x="-4" y="-4" width="8" height="8" stroke="#d9dbdf" /><path d="M-4,4l8,-8v8z" fill="#d9dbdf" stroke="none"/></g>
<g transform="translate(14.5,146.5)" stroke="#d9dbdf" stroke-width="1.1"><path d="M-2.5,3.5c-5.5,-5 -2.5,-11 2.5,-11s8,6 2.5,11v2.5h-5zM-2.5,7.5h5M-2.5,4.5h5"/></g>
<g transform="translate(14.5,177.5)" stroke="#d9dbdf" stroke-width="1.1"><path d="M-6.5,-2.5l6.5,-2.8l6.5,2.8v6.5l-6.5,3.5l-6.5,-3.5zM-6.5,-2.5l6.5,3l6.5,-3M0,.5v7"/><ellipse cx="0" cy="-5.2" rx="2.8" ry="1.2"/><path d="M-2.8,-5.2v2.2M2.8,-5.2v2.2"/></g>
<g transform="translate(14.5,240)" stroke="#e6e7ea" stroke-width="1.1"><rect x="-7.5" y="-7.5" width="8" height="4.5"/><path d="M-5.5,-3v8.5h3.5M-5.5,0.5h3.5"/><rect x="-2" y="-1.5" width="9" height="4"/><rect x="-2" y="4" width="9" height="4"/><path d="M-5.5,-5.3h4" /></g>
<g transform="translate(228,131.3)" stroke="#e6e7ea" stroke-width="1"><path d="M-2.3,-2.3l4.6,4.6M2.3,-2.3l-4.6,4.6"/></g>
<g transform="translate(412,131.3)" stroke="#e6e7ea" stroke-width="1"><path d="M-2.3,-2.3l4.6,4.6M2.3,-2.3l-4.6,4.6"/></g>
<g transform="translate(498,131.3)" stroke="#e6e7ea" stroke-width="1"><path d="M-2.3,-2.3l4.6,4.6M2.3,-2.3l-4.6,4.6"/></g>
<g transform="translate(697,131.3)" stroke="#e6e7ea" stroke-width="1"><path d="M-2.3,-2.3l4.6,4.6M2.3,-2.3l-4.6,4.6"/></g>
<g transform="translate(779,131.3)" stroke="#e6e7ea" stroke-width="1"><path d="M-2.3,-2.3l4.6,4.6M2.3,-2.3l-4.6,4.6"/></g>
<g transform="translate(796,131.3)" stroke="#e6e7ea" stroke-width="1"><path d="M-2.3,0h4.6M0,-2.3v4.6"/></g>
<g transform="translate(1515,170)" stroke="#a9acb2" stroke-width=".9"><path d="M-2.5,-1.2l2.5,2.5l2.5,-2.5"/></g>
<g transform="translate(1427,187.5)" stroke="#a9acb2" stroke-width=".9"><path d="M-2.5,-1.2l2.5,2.5l2.5,-2.5"/></g>
<g transform="translate(1515,187.5)" stroke="#a9acb2" stroke-width=".9"><path d="M-2.5,-1.2l2.5,2.5l2.5,-2.5"/></g>
<g transform="translate(1535,169.5)" ><path d="M-1,-3.5a3.6,3.6 0 0 0 0,7" stroke="#e6e7ea" stroke-width="1.3"/><path d="M1.5,-3.5a3.6,3.6 0 0 1 0,7" stroke="#3d8bf0" stroke-width="1.3"/><path d="M-2,-5l1.5,1.5l-1.8,1.2M2.5,5l-1.5,-1.5l1.8,-1.2" stroke-width=".8"/></g>
<g transform="translate(1554.5,169.5)" ><rect x="-5" y="-5" width="10" height="10" stroke="#d9dbdf"/><path d="M-5,-2h10M-5,1.5h6M-1.8,-2v7M1.5,-2v4" stroke="#d9dbdf" stroke-width=".8"/><path d="M-5,-5h10v3h-10z" fill="#d9dbdf" stroke="none"/><path d="M3.5,1.5v4M1.5,3.5h4" stroke="#4caf50" stroke-width="1.2"/></g>
<g transform="translate(1534.5,186.5)" ><rect x="-5" y="-5" width="6" height="9.5" stroke="#d9dbdf" stroke-width=".8"/><path d="M-5,-2h6M-5,1.5h6M-2,-5v9.5" stroke="#d9dbdf" stroke-width=".7"/><rect x="1" y="-5" width="3" height="9.5" fill="#3d8bf0" stroke="#3d8bf0" stroke-width=".6"/><path d="M4,3v3M2.5,4.5h3" stroke="#4caf50" stroke-width="1"/></g>
<g transform="translate(1554.5,186.5)" ><path d="M-4.5,4.5v-4l1.5,-4.5h1.5v8.5zM4.5,4.5v-4l-1.5,-4.5h-1.5v8.5zM-1.5,-1h3" fill="#d9dbdf" stroke="#d9dbdf" stroke-width=".8"/></g>
<g transform="translate(1555.8,767.3)" stroke="#555" stroke-width="1"><path d="M-2.2,1l2.2,-2.2l2.2,2.2"/></g>
<g transform="translate(1580.5,146.3)" stroke="#e0e2e5" stroke-width="1.2"><path d="M-7,-7h5v5h-5zM1,-7h6v14.5h-14v-5h8z"/><rect x="-1.2" y="-1.2" width="2" height="2" fill="#e0e2e5"/></g>
<g transform="translate(1580.5,177.3)" stroke="#e0e2e5" stroke-width="1.2"><path d="M-8,-4h3M-1,-4h9M-8,4h9M5,4h3"/><circle cx="-3" cy="-4" r="2"/><circle cx="3" cy="4" r="2"/></g>
<g transform="translate(1580.5,208)" stroke="#e0e2e5" stroke-width="1.2"><path d="M-7,-1.5c0,-9 14,-9 14,0c0,3 -4,5 -7,7.5c-3,-2.5 -7,-4.5 -7,-7.5zM-2.5,-7.5c-2,3 -1,9 2.5,13.5M2.5,-7.5c2,3 1,9 -2.5,13.5M0,-8v14"/><circle cy="7.5" r="1.3"/></g>
<g transform="translate(1580.5,240)" stroke="#e0e2e5" stroke-width="1.2"><rect x="-7.5" y="-6.5" width="15" height="13"/><path d="M-7.5,-3h15M-7.5,0.3h15M-7.5,3.5h15M-2.5,-3v9.5M2.5,-3v9.5"/></g>
<g transform="translate(1580.5,271.8)" stroke="#e0e2e5" stroke-width="1.3"><path d="M-7.3,4.2l6.2,-10.8a2,2 0 0 1 3.5,2l-6.2,10.8M-3.8,6.2a2,2 0 1 1 -3.5,-2M-5,7h12.2v-11.5l-6.5,11.5M3.7,4.5l1.5,-2.8v2.8z"/></g>
<g transform="translate(1580.5,303)" stroke="#e0e2e5"><path d="M-4,5a3.2,3.2 0 0 1 -.5,-6.3a4.4,4.4 0 0 1 8.5,-1a3.7,3.7 0 0 1 .5,7.3z" stroke-width="1.3"/><path d="M-1.8,0h3.2m-1.1,-1.1l1.1,1.1M2,2.2h-3.2m1.1,1.1l-1.1,-1.1" stroke-width=".9"/></g>
<g transform="translate(1580.5,333.8)" stroke="#d0d2d6" stroke-width="1.5"><path d="M-3.6,-2.5v6.5a3.6,3.6 0 0 0 7.2,0v-9a2.5,2.5 0 0 0 -5,0v8.5a1.1,1.1 0 0 0 2.2,0v-6" /></g>
<g transform="translate(1580.5,365.5)" stroke="#e0e2e5" stroke-width="1.25"><path d="M0,-6.5l7,12.2h-14zM0,-2v4.3M0,4v.5"/></g>
</svg>
</body></html>
